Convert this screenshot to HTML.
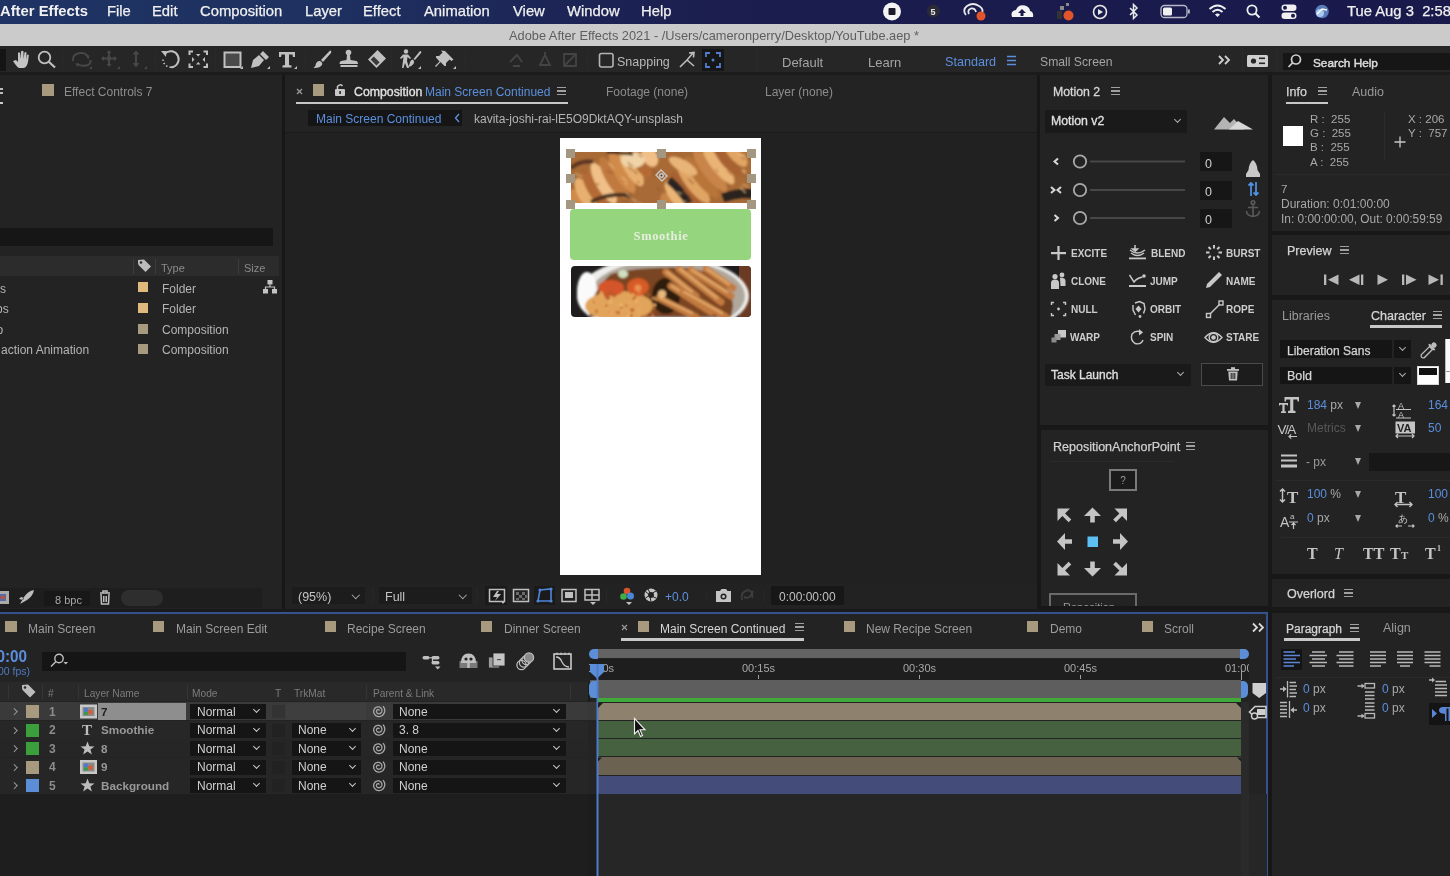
<!DOCTYPE html>
<html><head><meta charset="utf-8">
<style>
*{margin:0;padding:0;box-sizing:border-box}
body{will-change:transform}
html,body{width:1450px;height:876px;overflow:hidden;background:#171717;font-family:"Liberation Sans",sans-serif;font-size:12px;color:#a6a6a6}
.a{position:absolute}
.t{position:absolute;line-height:14px;white-space:nowrap;margin-top:1px}
.p{position:absolute;background:#232323}
.sw{position:absolute;width:10px;height:10px;background:#a89a7e}
.hb{position:absolute;width:9px;height:8px;border-top:1.5px solid #a0a0a0;border-bottom:1.5px solid #a0a0a0}
.hb:after{content:"";position:absolute;left:0;right:0;top:2px;height:1.5px;background:#a0a0a0}
.dd{position:absolute;background:#171717}
.chev{position:absolute;width:6px;height:6px;border-right:1.5px solid #b0b0b0;border-bottom:1.5px solid #b0b0b0;transform:rotate(45deg)}
.blue{color:#5f8fdc}
svg{position:absolute;overflow:visible}
</style></head><body>

<!-- MENU BAR -->
<div class="a" style="left:0;top:0;width:1450px;height:24px;background:linear-gradient(90deg,#1f3464 0%,#1e3161 22%,#1d2b5b 30%,#1c2455 40%,#1b1e4f 50%,#1a1c4d 62%,#191a4b 100%)"></div>
<style>.mn{position:absolute;top:3px;font-size:14.8px;line-height:17px;color:#f0f0f0;white-space:nowrap;-webkit-text-stroke:0.25px #f0f0f0}</style>
<div class="mn" style="left:0;font-weight:bold;-webkit-text-stroke:0">After Effects</div>
<div class="mn" style="left:107px">File</div>
<div class="mn" style="left:152px">Edit</div>
<div class="mn" style="left:200px">Composition</div>
<div class="mn" style="left:305px">Layer</div>
<div class="mn" style="left:363px">Effect</div>
<div class="mn" style="left:424px">Animation</div>
<div class="mn" style="left:513px">View</div>
<div class="mn" style="left:567px">Window</div>
<div class="mn" style="left:641px">Help</div>
<div class="mn" style="left:1347px">Tue Aug 3&nbsp; 2:58</div>
<svg width="1450" height="24" style="left:0;top:0">
 <circle cx="892" cy="11.5" r="9" fill="#f4f4f4"/><rect x="888.5" y="8" width="7" height="7" rx="1" fill="#1a1a2a"/>
 <circle cx="933.5" cy="11" r="6.5" fill="#2a2a36"/><text x="930.5" y="15" font-size="9" font-weight="bold" font-family="Liberation Sans" fill="#e8e8e8">5</text>
 <g fill="none" stroke="#eaeaea" stroke-width="1.8"><path d="M966 15 Q962 10 967 6 Q973 2 979 6 Q984 9 982 13"/><path d="M969 14 Q967 10 971 8.5 Q975 8 976 12"/></g>
 <circle cx="981" cy="16" r="4.5" fill="#e2552a"/>
 <path d="M1012 17 Q1010 11 1016 10 Q1018 4 1025 5.5 Q1030 7 1030 11 Q1034 12 1033 17Z" fill="#f4f4f4"/>
 <path d="M1022 9 L1026 13 L1023.5 13 L1023.5 16 L1020.5 16 L1020.5 13 L1018 13Z" fill="#1a1b4d"/>
 <g fill="#8a8a8a"><rect x="1060" y="6" width="4" height="4"/><rect x="1066" y="3" width="3" height="3"/><rect x="1057" y="11" width="5" height="8" fill="#333"/></g>
 <circle cx="1068.5" cy="15.5" r="5" fill="#e2552a"/>
 <circle cx="1100" cy="12" r="6.5" fill="none" stroke="#eaeaea" stroke-width="1.6"/><path d="M1098 9 L1103 12 L1098 15Z" fill="#eaeaea"/>
 <path d="M1130 8 L1137 15 L1133.5 18.5 L1133.5 4.5 L1137 8 L1130 15" fill="none" stroke="#eaeaea" stroke-width="1.5"/>
 <rect x="1161" y="5.5" width="26" height="12" rx="3.5" fill="none" stroke="#b8b8c8" stroke-width="1.3"/>
 <rect x="1163" y="7.5" width="9" height="8" rx="1.5" fill="#f0f0f0"/><rect x="1188" y="9.5" width="1.8" height="4" fill="#b8b8c8"/>
 <g fill="none" stroke="#f0f0f0" stroke-width="2"><path d="M1209.5 9 Q1217.5 2 1225.5 9"/><path d="M1212.5 12 Q1217.5 7.5 1222.5 12"/></g><path d="M1215 14.5 L1217.5 17 L1220 14.5 Q1217.5 12.5 1215 14.5Z" fill="#f0f0f0"/>
 <circle cx="1252" cy="10" r="4.6" fill="none" stroke="#f0f0f0" stroke-width="1.8"/><path d="M1255.5 13.5 L1259.5 17.5" stroke="#f0f0f0" stroke-width="2"/>
 <rect x="1281.5" y="4.5" width="15" height="6.5" rx="3.2" fill="#f0f0f0"/><circle cx="1285" cy="7.75" r="2" fill="#1a1b4d"/>
 <rect x="1281.5" y="12.5" width="15" height="6.5" rx="3.2" fill="#f0f0f0"/><circle cx="1293" cy="15.75" r="2" fill="#1a1b4d"/>
 <circle cx="1322" cy="11.5" r="6.8" fill="#5a7ab8"/><circle cx="1320" cy="13" r="4" fill="#a8c8f0"/><path d="M1317 14 L1322 9 L1327 10" stroke="#fff" stroke-width="1.3" fill="none"/>
</svg>
<!-- TITLE BAR -->
<div class="a" style="left:0;top:24px;width:1450px;height:22px;background:#cbcbcb"></div>
<div class="t" style="left:509px;top:27px;font-size:12.8px;line-height:15px;color:#5e5e5e">Adobe After Effects 2021 - /Users/cameronperry/Desktop/YouTube.aep *</div>


<!-- TOOLBAR ICONS -->
<div class="a" style="left:0;top:46px;width:1450px;height:26px;background:#262626"></div>
<div class="a" style="left:0;top:72px;width:1450px;height:3px;background:#1b1b1b"></div>
<div class="a" style="left:0;top:49px;width:6px;height:22px;background:#151515"></div>
<svg width="1450" height="876" style="left:0;top:0">
<g fill="#c4c4c4" stroke="none">
 <!-- hand -->
 <path d="M13 61 L16 60 L18 62 L18 53 Q19 51.5 20 53 L20.5 59 L21 51.5 Q22.5 50 23.5 51.5 L23.5 59 L24.5 52.5 Q26 51.5 26.5 53 L26 60 L27 55 Q28.5 54 28.8 55.5 L28 62 Q27 67 24 68 L19 68 Q17 67 15 64 Z"/>
</g>
<g fill="none" stroke="#c0c0c0" stroke-width="1.8">
 <circle cx="44.5" cy="57.5" r="5.8"/>
 <path d="M48.8 61.8 L55 67.5" stroke-width="2.2"/>
</g>
<g fill="none" stroke="#474747" stroke-width="2">
 <path d="M73 61 Q72 54 80 53 Q86 52.5 88 57 M77 64 Q82 67 88 65 Q91 63.5 90.5 60"/>
 <path d="M109 52 L109 65 M102.5 58.5 L115.5 58.5"/>
 <path d="M136 52 L136 66"/>
</g>
<g fill="#474747"><path d="M85 55 L89.5 55.5 L88.5 59.5Z M79 63 L75.5 63.5 L77 67Z M109 50 L106.5 53 L111.5 53Z M109 67 L106.5 64 L111.5 64Z M101 58.5 L104 56 L104 61Z M117 58.5 L114 56 L114 61Z M136 50.5 L132.5 54.5 L139.5 54.5Z M136 67.5 L132.5 63 L139.5 63Z"/><circle cx="109" cy="58.5" r="2.2"/></g>
<g fill="#4a4a4a"><path d="M92 69 L92 66 L89 69Z M120 69 L120 66 L117 69Z M147 69 L147 66 L144 69Z"/></g>
<g fill="none" stroke="#c0c0c0" stroke-width="2">
 <path d="M165 53.5 A8 8 0 1 1 171 67.2"/><path d="M171 67.2 A8 8 0 0 1 163 59.5" stroke-dasharray="1.6 2" stroke-width="1.6"/>
 <path d="M189.5 55 L189.5 51.5 L193 51.5 M203.5 51.5 L207 51.5 L207 55 M207 63.5 L207 67 L203.5 67 M193 67 L189.5 67 L189.5 63.5" />
 <rect x="224.5" y="52.5" width="16" height="14.5" fill="#4a4a4a"/>
</g>
<g fill="#c0c0c0">
 <path d="M161 51 L166.5 51 L166 57 Z"/>
 <path d="M196 54 L200.5 54 L198.2 56.5Z M196 64.5 L200.5 64.5 L198.2 62Z M192 57 L192 62 L194.5 59.5Z M205 57 L205 62 L202.5 59.5Z"/>
 <path d="M243 69 L243 66 L240 69Z M270 69 L270 66 L267 69Z M297 69 L297 66 L294 69Z M421 69 L421 66 L418 69Z M456 69 L456 66 L453 69Z"/>
 <!-- pen -->
 <path d="M251 68 L253 60 L259 55 L264 60 L259 66 Z M260 54 L263 51 L269 57 L266 60 Z"/>
 <!-- T -->
 <path d="M279 52 L295 52 L295 57 L293 57 L292.5 54.5 L289 54.5 L289 65 L291.5 65.5 L291.5 67.5 L282.5 67.5 L282.5 65.5 L285 65 L285 54.5 L281.5 54.5 L281 57 L279 57 Z"/>
 <!-- brush -->
 <path d="M330 50.5 Q332 51 331 53 L323 62 L321 60 Z M320 61 Q323 62.5 322 65 Q319.5 68.5 313.5 68 Q316 66 316 63.5 Q317 60.5 320 61Z"/>
 <!-- stamp -->
 <circle cx="348.5" cy="52.5" r="2.8"/>
 <path d="M347 55 L350 55 L350.5 60 L356.5 61 Q358 61.5 358 64 L339.5 64 Q339.5 61.5 341 61 L346.5 60Z"/>
 <rect x="340.5" y="65" width="17" height="2"/>
 <!-- eraser -->
 <path d="M377.5 50 L386 58.5 L376.5 68 L368 59.5 Z"/>
 <!-- puppet -->
 <circle cx="406" cy="51.5" r="2.2"/>
 <path d="M403 54.5 L408 54.5 L411 58 L410 59 L407.5 57 L407 61 L409 68 L407 68 L405 63 L403.5 68 L402 68 L403.5 57 L401 59 L400 58Z"/>
 <path d="M420 51 Q422 51 421 53 L415 60 L413.5 59Z M412.5 59.5 Q415 61 413.5 64 Q411 67 408 67 Q410 64 410 62 Q411 59.5 412.5 59.5Z"/>
 <!-- pin -->
 <path d="M445 51 L453.5 59.5 L451.5 61 L449.5 59.5 L446 63 L446 66 L444.5 66 L440.5 62 L436 67 L435 66 L439.5 61.5 L436 57.5 L436 56 L439 56 L442.5 52.5 L441 50.5 Z"/>
</g>
<path d="M370.6 59.6 L373.8 56.4 L379.6 62.2 L376.4 65.4Z" fill="#3a3a3a"/>
<g stroke="#2a2a2a" stroke-width="1"><path d="M62.5 50 L62.5 70 M155.5 50 L155.5 70 M215.5 50 L215.5 70 M305.5 50 L305.5 70 M391.5 50 L391.5 70 M465.5 50 L465.5 70 M587.5 50 L587.5 70 M757.5 48 L757.5 72 M1242.5 48 L1242.5 72 M1277.5 48 L1277.5 72"/></g>
<!-- dim icons -->
<g fill="none" stroke="#444" stroke-width="1.8">
 <path d="M510 62 L517 55 L522 62 M513 66 L520 66"/>
 <path d="M540 65 L545 55 L550 65 Z M545 55 L545 52"/>
 <path d="M564 54 L576 54 L576 66 L564 66 Z M564 66 L576 54"/>
</g>
<!-- snapping -->
<rect x="599.5" y="53.5" width="13.5" height="13.5" rx="2" fill="none" stroke="#b4b4b4" stroke-width="1.6"/>
<g fill="none" stroke="#bcbcbc" stroke-width="1.6"><path d="M680 67 L687 60 L694 66 M687 60 L693 53 M689 53 L694 52.5 L693.5 57.5"/></g>
<rect x="702" y="49" width="22" height="22" fill="#161616"/>
<g fill="none" stroke="#4f7ed0" stroke-width="1.8"><path d="M706 57 L706 53 L710 53 M716 53 L720 53 L720 57 M720 63 L720 67 L716 67 M710 67 L706 67 L706 63"/><circle cx="713" cy="60" r="1.5" fill="#4f7ed0" stroke="none"/></g>
<!-- workspace hamburger -->
<g stroke="#5c8fde" stroke-width="1.6"><path d="M1007 56.5 L1016 56.5 M1007 60.5 L1016 60.5 M1007 64.5 L1016 64.5"/></g>
<g fill="none" stroke="#d0d0d0" stroke-width="1.8"><path d="M1219 56 L1223 60 L1219 64 M1225 56 L1229 60 L1225 64"/></g>
<rect x="1247" y="55" width="21" height="12" rx="1.5" fill="#cfcfcf"/>
<g fill="#262626"><circle cx="1253.5" cy="61" r="2.6"/><rect x="1259" y="57.5" width="6" height="1.6"/><rect x="1259" y="62.5" width="6" height="1.6"/></g>
<rect x="1283" y="53" width="167" height="17" fill="#161616"/>
<g fill="none" stroke="#d0d0d0" stroke-width="1.7"><circle cx="1296" cy="59.5" r="4.5"/><path d="M1292.8 62.7 L1288.5 67"/></g>
</svg>
<div class="t" style="left:617px;top:53.5px;font-size:12.5px;line-height:15px;color:#b8b8b8">Snapping</div>
<div class="t" style="left:782px;top:53.5px;font-size:13px;line-height:15px;color:#a4a4a4">Default</div>
<div class="t" style="left:868px;top:53.5px;font-size:13px;line-height:15px;color:#a4a4a4">Learn</div>
<div class="t" style="left:945px;top:53.5px;font-size:12.6px;line-height:15px;color:#5c8fde">Standard</div>
<div class="t" style="left:1040px;top:53.5px;font-size:12.2px;line-height:15px;color:#a4a4a4">Small Screen</div>
<div class="t" style="left:1313px;top:55px;font-size:11.8px;line-height:14px;color:#dcdcdc;-webkit-text-stroke:0.45px #dcdcdc">Search Help</div>


<!-- LEFT PANEL -->
<div class="p" style="left:0;top:75px;width:282px;height:534px"></div>
<div class="a" style="left:0;top:88px;width:3px;height:2px;background:#bbb"></div>
<div class="a" style="left:0;top:92px;width:3px;height:2px;background:#bbb"></div>
<div class="a" style="left:0;top:102px;width:3px;height:2px;background:#ccc"></div>
<div class="sw" style="left:42px;top:84px;width:12px;height:12px"></div>
<div class="t" style="left:64px;top:84px;font-size:12px;color:#8e8e8e">Effect Controls 7</div>
<div class="a" style="left:0;top:228px;width:273px;height:18px;background:#161616"></div>
<div class="a" style="left:0;top:256px;width:279px;height:20px;background:#2c2c2c"></div>
<div class="a" style="left:133px;top:259px;width:1px;height:15px;background:#3c3c3c"></div>
<div class="a" style="left:155px;top:259px;width:1px;height:15px;background:#3c3c3c"></div>
<div class="a" style="left:238px;top:259px;width:1px;height:15px;background:#3c3c3c"></div>
<svg width="20" height="20" style="left:136px;top:258px"><path d="M2 5 L2 2 L8 1.5 L15 8.5 L9.5 14 L2.5 7 Z" fill="#bcbcbc"/><circle cx="5" cy="4.5" r="1.3" fill="#2c2c2c"/></svg>
<div class="t" style="left:161px;top:260px;font-size:11px;color:#8a8a8a">Type</div>
<div class="t" style="left:244px;top:260px;font-size:11px;color:#8a8a8a">Size</div>
<div class="sw" style="left:138px;top:282px;background:#e0b97f"></div>
<div class="sw" style="left:138px;top:303px;background:#e0b97f"></div>
<div class="sw" style="left:138px;top:324px"></div>
<div class="sw" style="left:138px;top:344px"></div>
<div class="t" style="left:162px;top:281px;color:#b4b4b4">Folder</div>
<div class="t" style="left:162px;top:301px;color:#b4b4b4">Folder</div>
<div class="t" style="left:162px;top:322px;color:#b4b4b4">Composition</div>
<div class="t" style="left:162px;top:342px;color:#b4b4b4">Composition</div>
<div class="t" style="left:0px;top:281px;color:#b4b4b4">s</div>
<div class="t" style="left:-4px;top:301px;color:#b4b4b4">os</div>
<div class="t" style="left:-3.5px;top:322px;color:#b4b4b4">o</div>
<div class="t" style="left:1px;top:342px;color:#b4b4b4">action Animation</div>
<svg width="20" height="20" style="left:262px;top:279px"><g fill="#c4c4c4"><rect x="5.5" y="1" width="5" height="4.5"/><rect x="1" y="10" width="5" height="4.5"/><rect x="10" y="10" width="5" height="4.5"/></g><path d="M8 5.5 L8 8 L3.5 8 L3.5 10 M8 8 L12.5 8 L12.5 10" fill="none" stroke="#c4c4c4" stroke-width="1.2"/></svg>
<!-- left bottom bar -->
<div class="a" style="left:0;top:588px;width:262px;height:20px;background:#1e1e1e"></div>
<svg width="20" height="20" style="left:0;top:588px"><rect x="-6" y="3" width="15" height="13" fill="#aaa"/><rect x="-4" y="6" width="10" height="7" fill="#5a6aa0"/><rect x="1" y="8" width="4" height="3" fill="#c0503a"/></svg>
<svg width="20" height="20" style="left:18px;top:588px"><path d="M2 16 L6 9 Q10 3 16 2 Q15 8 9 12 Z M6 10 L3 9 L1 11 L5 12Z" fill="#bdbdbd"/></svg>
<div class="a" style="left:44px;top:591px;width:46px;height:15px;background:#181818"></div>
<div class="t" style="left:55px;top:592px;font-size:11px;color:#a6a6a6">8 bpc</div>
<svg width="20" height="20" style="left:96px;top:588px"><g fill="none" stroke="#bdbdbd" stroke-width="1.5"><path d="M4 5 L14 5 M7 5 L7 3 L11 3 L11 5 M5 6 L5.5 16 L12.5 16 L13 6"/><path d="M7.5 8 L7.5 14 M9 8 L9 14 M10.5 8 L10.5 14" stroke-width="1"/></g></svg>
<div class="a" style="left:121px;top:590px;width:42px;height:16px;border-radius:8px;background:#2e2e2e"></div>

<!-- COMP PANEL -->
<div class="p" style="left:285px;top:75px;width:752px;height:534px"></div>
<svg width="20" height="20" style="left:293px;top:82px"><path d="M4 7 L9 12 M9 7 L4 12" stroke="#9a9a9a" stroke-width="1.3"/></svg>
<div class="sw" style="left:313px;top:84px;width:11px;height:12px"></div>
<svg width="14" height="14" style="left:334px;top:83px"><g fill="#c8c8c8"><rect x="1" y="6" width="10" height="7" rx="1"/></g><path d="M3.5 6 L3.5 3.5 Q6 0.5 8.5 3" fill="none" stroke="#c8c8c8" stroke-width="1.5"/><rect x="5.3" y="8" width="1.6" height="3" fill="#232323"/></svg>
<div class="t" style="left:354px;top:84px;font-size:12.3px;color:#e2e2e2;-webkit-text-stroke:0.35px #e2e2e2">Composition</div>
<div class="t" style="left:425px;top:84px;font-size:12px;color:#5b8fde">Main Screen Continued</div>
<div class="hb" style="left:557px;top:87px"></div>
<div class="a" style="left:296px;top:102px;width:272px;height:2px;background:#c8c8c8"></div>
<div class="t" style="left:606px;top:84px;font-size:12px;color:#8c8c8c">Footage (none)</div>
<div class="t" style="left:765px;top:84px;font-size:12px;color:#8c8c8c">Layer (none)</div>
<div class="a" style="left:308px;top:110px;width:154px;height:16px;background:#151515"></div>
<div class="t" style="left:316px;top:111px;font-size:12px;color:#5b8fde">Main Screen Continued</div>
<svg width="10" height="14" style="left:453px;top:111px"><path d="M6 3 L2.5 7 L6 11" fill="none" stroke="#5b8fde" stroke-width="1.4"/></svg>
<div class="t" style="left:474px;top:111px;font-size:12px;color:#b4b4b4">kavita-joshi-rai-lE5O9DktAQY-unsplash</div>
<div class="a" style="left:285px;top:132px;width:752px;height:1px;background:#1b1b1b"></div>
<div class="a" style="left:285px;top:133px;width:752px;height:451px;background:#212121"></div>
<!-- comp canvas -->
<div class="a" style="left:560px;top:138px;width:201px;height:437px;background:#fff"></div>
<svg width="180" height="51" style="left:571px;top:152px">
<defs><filter id="bl1" x="-10%" y="-10%" width="120%" height="120%"><feGaussianBlur stdDeviation="0.9"/></filter><clipPath id="cp1"><rect width="180" height="51"/></clipPath></defs>
<g clip-path="url(#cp1)"><rect width="180" height="51" fill="#a86a36"/><g filter="url(#bl1)">
<g transform="translate(42 26) rotate(-30)"><ellipse cx="-42.7" cy="0" rx="7.3" ry="11.0" fill="#d08a4a"/><ellipse cx="-32.0" cy="0" rx="7.3" ry="17.9" fill="#e8b070"/><ellipse cx="-21.3" cy="0" rx="7.3" ry="21.5" fill="#b46a34"/><ellipse cx="-10.7" cy="0" rx="7.3" ry="23.4" fill="#f0c088"/><ellipse cx="0.0" cy="0" rx="7.3" ry="24.0" fill="#c07a40"/><ellipse cx="10.7" cy="0" rx="7.3" ry="23.4" fill="#d08a4a"/><ellipse cx="21.3" cy="0" rx="7.3" ry="21.5" fill="#e8b070"/><ellipse cx="32.0" cy="0" rx="7.3" ry="17.9" fill="#b46a34"/><ellipse cx="42.7" cy="0" rx="7.3" ry="11.0" fill="#f0c088"/></g>
<g transform="translate(135 22) rotate(-38)"><ellipse cx="-46.8" cy="0" rx="7.2" ry="11.3" fill="#c8844a"/><ellipse cx="-36.4" cy="0" rx="7.2" ry="18.6" fill="#eab474"/><ellipse cx="-26.0" cy="0" rx="7.2" ry="22.5" fill="#a86230"/><ellipse cx="-15.6" cy="0" rx="7.2" ry="24.8" fill="#e0a464"/><ellipse cx="-5.2" cy="0" rx="7.2" ry="25.9" fill="#b87438"/><ellipse cx="5.2" cy="0" rx="7.2" ry="25.9" fill="#c8844a"/><ellipse cx="15.6" cy="0" rx="7.2" ry="24.8" fill="#eab474"/><ellipse cx="26.0" cy="0" rx="7.2" ry="22.5" fill="#a86230"/><ellipse cx="36.4" cy="0" rx="7.2" ry="18.6" fill="#e0a464"/><ellipse cx="46.8" cy="0" rx="7.2" ry="11.3" fill="#b87438"/></g>
<ellipse cx="62" cy="8" rx="12" ry="8" fill="#f0d4a8"/>
<ellipse cx="112" cy="14" rx="16" ry="6" fill="#e8b478" transform="rotate(30 112 14)"/>
<path d="M98 28 Q110 38 118 51" stroke="#2a2420" stroke-width="8" fill="none"/>
<path d="M152 46 Q168 40 182 42" stroke="#2a221e" stroke-width="9" fill="none"/>
<path d="M0 16 Q10 8 22 10" stroke="#5a3620" stroke-width="4" fill="none"/>
<path d="M20 50 Q40 40 60 44" stroke="#4a3020" stroke-width="4" fill="none"/>
<path d="M36 0 L62 2" stroke="#4a2e1c" stroke-width="3" fill="none"/>
<path d="M112.1 37.8 L116.6 43.1" stroke="#a6622e" stroke-width="1.2" opacity="0.7"/>
<path d="M117.4 27.0 L122.6 32.0" stroke="#8a4c22" stroke-width="1.2" opacity="0.7"/>
<path d="M116.8 45.9 L119.8 47.9" stroke="#8a4c22" stroke-width="1.2" opacity="0.7"/>
<path d="M68.5 5.2 L71.7 8.1" stroke="#f0c890" stroke-width="1.2" opacity="0.7"/>
<path d="M50.3 46.7 L56.6 49.4" stroke="#8a4c22" stroke-width="1.2" opacity="0.7"/>
<path d="M25.0 31.5 L28.4 32.6" stroke="#8a4c22" stroke-width="1.2" opacity="0.7"/>
<path d="M37.7 11.0 L43.1 16.8" stroke="#f0c890" stroke-width="1.2" opacity="0.7"/>
<path d="M56.5 10.1 L62.2 14.8" stroke="#8a4c22" stroke-width="1.2" opacity="0.7"/>
<path d="M169.4 35.2 L174.6 41.0" stroke="#f0c890" stroke-width="1.2" opacity="0.7"/>
<path d="M3.9 21.2 L10.8 24.6" stroke="#f0c890" stroke-width="1.2" opacity="0.7"/>
<path d="M54.2 30.8 L56.5 32.7" stroke="#f0c890" stroke-width="1.2" opacity="0.7"/>
<path d="M11.9 18.1 L15.3 21.1" stroke="#8a4c22" stroke-width="1.2" opacity="0.7"/>
<path d="M86.6 35.9 L88.7 38.5" stroke="#8a4c22" stroke-width="1.2" opacity="0.7"/>
<path d="M170.9 18.2 L174.9 21.2" stroke="#f0c890" stroke-width="1.2" opacity="0.7"/>
<path d="M65.9 29.5 L68.8 30.5" stroke="#8a4c22" stroke-width="1.2" opacity="0.7"/>
<path d="M112.3 48.7 L115.5 50.2" stroke="#f0c890" stroke-width="1.2" opacity="0.7"/>
<path d="M62.0 18.1 L66.0 22.0" stroke="#8a4c22" stroke-width="1.2" opacity="0.7"/>
<path d="M106.2 39.8 L110.5 42.1" stroke="#f0c890" stroke-width="1.2" opacity="0.7"/>
<path d="M170.2 4.7 L173.9 7.6" stroke="#8a4c22" stroke-width="1.2" opacity="0.7"/>
<path d="M61.2 47.1 L66.3 49.8" stroke="#f0c890" stroke-width="1.2" opacity="0.7"/>
<path d="M55.1 40.7 L59.7 44.8" stroke="#f0c890" stroke-width="1.2" opacity="0.7"/>
<path d="M179.4 8.2 L181.4 10.8" stroke="#a6622e" stroke-width="1.2" opacity="0.7"/>
<path d="M166.2 1.6 L172.1 4.9" stroke="#f0c890" stroke-width="1.2" opacity="0.7"/>
<path d="M82.0 21.5 L84.2 24.0" stroke="#8a4c22" stroke-width="1.2" opacity="0.7"/>
<path d="M144.3 17.0 L146.8 20.2" stroke="#a6622e" stroke-width="1.2" opacity="0.7"/>
<path d="M171.0 32.2 L177.4 34.6" stroke="#f0c890" stroke-width="1.2" opacity="0.7"/>
<path d="M67.1 3.0 L71.9 4.9" stroke="#a6622e" stroke-width="1.2" opacity="0.7"/>
<path d="M153.4 49.8 L157.8 52.7" stroke="#a6622e" stroke-width="1.2" opacity="0.7"/>
<path d="M57.2 14.0 L60.8 18.0" stroke="#8a4c22" stroke-width="1.2" opacity="0.7"/>
<path d="M67.9 50.4 L73.9 55.3" stroke="#f0c890" stroke-width="1.2" opacity="0.7"/>
<path d="M156.2 9.2 L160.7 12.3" stroke="#a6622e" stroke-width="1.2" opacity="0.7"/>
<path d="M156.1 18.4 L161.1 23.2" stroke="#a6622e" stroke-width="1.2" opacity="0.7"/>
<path d="M105.7 1.8 L109.4 4.4" stroke="#a6622e" stroke-width="1.2" opacity="0.7"/>
<path d="M50.6 24.8 L55.7 29.3" stroke="#f0c890" stroke-width="1.2" opacity="0.7"/>
<path d="M172.2 17.3 L174.9 20.2" stroke="#f0c890" stroke-width="1.2" opacity="0.7"/>
<path d="M98.5 12.8 L103.8 16.3" stroke="#a6622e" stroke-width="1.2" opacity="0.7"/>
<path d="M116.5 40.7 L120.2 43.7" stroke="#a6622e" stroke-width="1.2" opacity="0.7"/>
<path d="M168.8 20.8 L175.8 23.8" stroke="#a6622e" stroke-width="1.2" opacity="0.7"/>
<path d="M81.0 18.6 L85.3 20.3" stroke="#8a4c22" stroke-width="1.2" opacity="0.7"/>
<path d="M35.8 18.5 L42.2 21.8" stroke="#8a4c22" stroke-width="1.2" opacity="0.7"/>
</g>
<g fill="none" stroke="#c8c8c8" stroke-width="1.4"><path d="M85 23 L90 18 L96 24 L91 29 Z"/><circle cx="90.5" cy="23.5" r="1.8" fill="#444"/></g>
</g></svg>
<g></g>
<div class="a" style="left:570px;top:209px;width:181px;height:51px;background:#95d57d;border-radius:4px"></div>
<div class="t" style="left:561px;top:228px;width:200px;text-align:center;font-family:'Liberation Serif',serif;font-weight:bold;font-size:12.5px;letter-spacing:0.6px;color:#e6eee0">Smoothie</div>
<svg width="180" height="51" style="left:570.5px;top:265.5px">
<defs><filter id="bl2" x="-10%" y="-10%" width="120%" height="120%"><feGaussianBlur stdDeviation="0.8"/></filter><clipPath id="cp2"><rect width="180" height="51" rx="4"/></clipPath></defs>
<g clip-path="url(#cp2)">
<rect width="180" height="51" fill="#1e1c1c"/>
<rect x="168" y="0" width="12" height="51" fill="#6a3a22"/>
<g filter="url(#bl2)">
<ellipse cx="92" cy="30" rx="86" ry="40" fill="#eeeeec"/>
<ellipse cx="96" cy="30" rx="78" ry="36" fill="#b0a89c"/>
<ellipse cx="16" cy="26" rx="10" ry="20" fill="#fafafa"/>
<path d="M18 51 Q20 25 40 8 Q70 0 120 2 Q160 10 162 40 L160 51Z" fill="#7a4420"/>
<ellipse cx="48" cy="40" rx="34" ry="15" fill="#e2a45a"/>
<ellipse cx="40" cy="22" rx="13" ry="8" fill="#d4542a"/><ellipse cx="67" cy="21" rx="11" ry="9" fill="#d85a26"/>
<circle cx="67" cy="22" r="3.5" fill="#e89050"/>
<ellipse cx="52" cy="8" rx="5" ry="4" fill="#cfe0c0"/>
<ellipse cx="95" cy="30" rx="14" ry="18" fill="#2e1a0e"/>
<path d="M95 6 L125 30" stroke="#c27a40" stroke-width="7" stroke-linecap="round"/>
<path d="M96 6 L121 26" stroke="#e6b070" stroke-width="2.4" stroke-linecap="round" opacity="0.85"/>
<path d="M108 3 L150 36" stroke="#c27a40" stroke-width="7" stroke-linecap="round"/>
<path d="M109 3 L146 32" stroke="#e6b070" stroke-width="2.4" stroke-linecap="round" opacity="0.85"/>
<path d="M120 4 L160 30" stroke="#c27a40" stroke-width="7" stroke-linecap="round"/>
<path d="M121 4 L156 26" stroke="#e6b070" stroke-width="2.4" stroke-linecap="round" opacity="0.85"/>
<path d="M100 20 L140 46" stroke="#c27a40" stroke-width="7" stroke-linecap="round"/>
<path d="M101 20 L136 42" stroke="#e6b070" stroke-width="2.4" stroke-linecap="round" opacity="0.85"/>
<path d="M88 32 L125 51" stroke="#c27a40" stroke-width="7" stroke-linecap="round"/>
<path d="M89 32 L121 47" stroke="#e6b070" stroke-width="2.4" stroke-linecap="round" opacity="0.85"/>
<path d="M135 3 L162 22" stroke="#c27a40" stroke-width="7" stroke-linecap="round"/>
<path d="M136 3 L158 18" stroke="#e6b070" stroke-width="2.4" stroke-linecap="round" opacity="0.85"/>
<path d="M112 26 L155 51" stroke="#c27a40" stroke-width="7" stroke-linecap="round"/>
<path d="M113 26 L151 47" stroke="#e6b070" stroke-width="2.4" stroke-linecap="round" opacity="0.85"/>
<circle cx="91" cy="28" r="4" fill="#e8b880"/>
<circle cx="35.5" cy="39.6" r="1.2" fill="#b8582a"/>
<circle cx="60.7" cy="27.6" r="0.8" fill="#b8582a"/>
<circle cx="36.9" cy="31.9" r="2.0" fill="#b8582a"/>
<circle cx="55.2" cy="39.7" r="1.3" fill="#c87838"/>
<circle cx="35.1" cy="29.8" r="1.9" fill="#b8582a"/>
<circle cx="68.2" cy="42.8" r="0.9" fill="#f0b870"/>
<circle cx="39.6" cy="26.8" r="1.8" fill="#b8582a"/>
<circle cx="58.7" cy="49.0" r="1.3" fill="#b8582a"/>
<circle cx="45.7" cy="46.0" r="1.3" fill="#c87838"/>
<circle cx="77.1" cy="28.4" r="1.0" fill="#c87838"/>
<circle cx="36.8" cy="42.8" r="1.7" fill="#e8a860"/>
<circle cx="47.4" cy="46.8" r="1.5" fill="#b8582a"/>
<circle cx="58.0" cy="48.6" r="1.6" fill="#f0b870"/>
<circle cx="75.7" cy="50.8" r="1.6" fill="#c87838"/>
<circle cx="65.4" cy="34.2" r="1.5" fill="#f0b870"/>
<circle cx="66.4" cy="31.3" r="1.8" fill="#e8a860"/>
<circle cx="38.5" cy="27.6" r="1.8" fill="#b8582a"/>
<circle cx="25.8" cy="46.0" r="1.3" fill="#c87838"/>
<circle cx="21.3" cy="36.7" r="1.3" fill="#f0b870"/>
<circle cx="22.9" cy="41.4" r="0.9" fill="#e8a860"/>
<circle cx="55.8" cy="49.0" r="1.1" fill="#c87838"/>
<circle cx="84.9" cy="33.7" r="0.9" fill="#f0b870"/>
<circle cx="81.7" cy="50.3" r="1.1" fill="#e8a860"/>
<circle cx="30.2" cy="27.1" r="1.8" fill="#e8a860"/>
<circle cx="43.4" cy="29.5" r="1.8" fill="#b8582a"/>
<circle cx="49.9" cy="39.0" r="1.6" fill="#f0b870"/>
<circle cx="60.3" cy="49.5" r="1.4" fill="#b8582a"/>
<circle cx="61.2" cy="43.9" r="1.9" fill="#b8582a"/>
<circle cx="83.6" cy="39.0" r="1.5" fill="#f0b870"/>
<circle cx="71.2" cy="50.7" r="1.2" fill="#b8582a"/>
<circle cx="60.0" cy="41.8" r="0.9" fill="#e8a860"/>
<circle cx="50.3" cy="43.0" r="1.2" fill="#e8a860"/>
<circle cx="68.0" cy="26.6" r="0.9" fill="#f0b870"/>
<circle cx="82.6" cy="32.3" r="1.3" fill="#e8a860"/>
<circle cx="31.5" cy="30.6" r="1.7" fill="#e8a860"/>
<circle cx="39.5" cy="35.4" r="1.7" fill="#f0b870"/>
<circle cx="83.1" cy="43.1" r="1.0" fill="#c87838"/>
<circle cx="62.5" cy="32.7" r="1.2" fill="#b8582a"/>
<circle cx="62.2" cy="28.4" r="1.5" fill="#e8a860"/>
<circle cx="63.9" cy="31.6" r="1.8" fill="#c87838"/>
<circle cx="25.2" cy="44.6" r="1.1" fill="#b8582a"/>
<circle cx="37.6" cy="45.7" r="0.8" fill="#c87838"/>
<circle cx="40.5" cy="46.9" r="1.5" fill="#e8a860"/>
<circle cx="42.1" cy="46.7" r="0.9" fill="#e8a860"/>
<circle cx="58.3" cy="36.5" r="1.4" fill="#e8a860"/>
<circle cx="50.2" cy="41.9" r="1.1" fill="#b8582a"/>
<circle cx="22.3" cy="36.3" r="1.0" fill="#b8582a"/>
<circle cx="81.3" cy="48.0" r="2.0" fill="#b8582a"/>
<circle cx="56.3" cy="50.6" r="1.7" fill="#f0b870"/>
<circle cx="68.5" cy="46.9" r="1.6" fill="#e8a860"/>
</g></g></svg>
<!-- handles -->
<div class="a" style="left:566px;top:149px;width:9px;height:9px;background:#a39781"></div>
<div class="a" style="left:657px;top:149px;width:9px;height:9px;background:#a39781"></div>
<div class="a" style="left:747px;top:149px;width:9px;height:9px;background:#a39781"></div>
<div class="a" style="left:566px;top:174px;width:9px;height:9px;background:#a39781"></div>
<div class="a" style="left:747px;top:174px;width:9px;height:9px;background:#a39781"></div>
<div class="a" style="left:566px;top:200px;width:9px;height:9px;background:#a39781"></div>
<div class="a" style="left:657px;top:200px;width:9px;height:9px;background:#a39781"></div>
<div class="a" style="left:747px;top:200px;width:9px;height:9px;background:#a39781"></div>
<!-- comp bottom bar -->
<div class="a" style="left:285px;top:584px;width:752px;height:25px;background:#222"></div>
<div class="dd" style="left:292px;top:587px;width:73px;height:17px;background:#1c1c1c"></div>
<div class="t" style="left:298px;top:589px;font-size:12.5px;color:#c4c4c4">(95%)</div>
<div class="chev" style="left:353px;top:591.5px;width:5.5px;height:5.5px"></div>
<div class="dd" style="left:379px;top:587px;width:93px;height:17px;background:#1c1c1c"></div>
<div class="t" style="left:385px;top:589px;font-size:12.5px;color:#c4c4c4">Full</div>
<div class="chev" style="left:460px;top:591.5px;width:5.5px;height:5.5px"></div>
<div class="a" style="left:485px;top:586px;width:22px;height:19px;background:#1a1a1a"></div>
<div class="a" style="left:534px;top:586px;width:21px;height:19px;background:#1a1a1a"></div>
<svg width="1450" height="876" style="left:0;top:0">
 <g fill="none" stroke="#c0c0c0" stroke-width="1.5">
  <rect x="489.5" y="589.5" width="15" height="12"/>
  <rect x="513.5" y="589.5" width="15" height="12"/>
  <rect x="562" y="589.5" width="14" height="12"/>
  <path d="M585 592 L585 589.5 L599 589.5 L599 600 L585 600 Z M592 589.5 L592 600 M585 595 L599 595"/>
 </g>
 <path d="M497 591 L493 597 L497 597 L495 601 L501 594 L497 594 L499 591Z" fill="#c0c0c0"/>
 <path d="M501 601 L505 601 L503 604Z M590 602 L596 602 L593 605Z M626 602 L632 602 L629 605Z" fill="#c0c0c0"/>
 <g fill="#6a6a6a"><rect x="516" y="592" width="3" height="3"/><rect x="522" y="592" width="3" height="3"/><rect x="519" y="595" width="3" height="3"/><rect x="525" y="595" width="2" height="3"/><rect x="516" y="598" width="3" height="2"/><rect x="522" y="598" width="3" height="2"/></g>
 <rect x="565" y="592" width="8" height="6" fill="#c0c0c0"/>
 <path d="M538 601 L540 590 L551 589 L551 601 Z" fill="none" stroke="#4f84d8" stroke-width="1.6"/>
 <g fill="#4f84d8"><circle cx="538" cy="601" r="1.6"/><circle cx="540" cy="590" r="1.6"/><circle cx="551" cy="589" r="1.6"/><circle cx="551" cy="601" r="1.6"/></g>
 <circle cx="627" cy="591" r="3.3" fill="#d9532e"/><circle cx="623.5" cy="596.5" r="3.3" fill="#3fae4a"/><circle cx="630.5" cy="596" r="3.5" fill="#4a86d8"/>
 <circle cx="651" cy="595" r="6.5" fill="#c4c4c4"/><circle cx="651" cy="595" r="3" fill="#222"/>
 <path d="M648 589 L650 593 M656 591 L652.5 593 M656 598 L652.5 596.5 M651 601.5 L650 597 M645.5 598 L648.5 596 M645.5 591.5 L648.5 594" stroke="#222" stroke-width="1"/>
 <path d="M716 591 L720 591 L721.5 589 L726 589 L727.5 591 L731 591 L731 602 L716 602Z" fill="#c4c4c4"/><circle cx="723.5" cy="596.5" r="3" fill="#222"/><circle cx="723.5" cy="596.5" r="1.5" fill="#c4c4c4"/>
 <path d="M742 600 Q740 592 748 590 Q754 592 752 598 M744 597 Q750 600 753 591" stroke="#3c3c3c" stroke-width="2" fill="none"/>
 <path d="M606.5 590 L606.5 602 M707 590 L707 602 M764 590 L764 602 M477 588 L477 603 M373 588 L373 603" stroke="#292929" stroke-width="1"/>
</svg>
<div class="t" style="left:665px;top:589px;font-size:12px;color:#5b8fde">+0.0</div>
<div class="a" style="left:771px;top:586px;width:73px;height:19px;background:#171717"></div>
<div class="t" style="left:779px;top:589px;font-size:12px;color:#c0c0c0">0:00:00:00</div>

<!-- MOTION PANEL -->
<div class="p" style="left:1040px;top:75px;width:228px;height:350px"></div>

<div class="t" style="left:1053px;top:84px;font-size:12.3px;color:#d6d6d6;-webkit-text-stroke:0.3px #d6d6d6">Motion 2</div>
<div class="hb" style="left:1111px;top:87px"></div>
<div class="a" style="left:1045px;top:110px;width:142px;height:23px;background:#1a1a1a"></div>
<div class="t" style="left:1051px;top:113px;font-size:12.3px;color:#e0e0e0;-webkit-text-stroke:0.3px #e0e0e0">Motion v2</div>
<div class="chev" style="left:1175px;top:117px;width:5px;height:5px"></div>
<svg width="1450" height="876" style="left:0;top:0">
 <path d="M1214 129.5 L1224 117 L1230 123 L1234 119 L1244 129.5 Z" fill="#b4b4b4"/>
 <path d="M1229 129.5 L1238 121 L1253 129.5 Z" fill="#d8d8d8"/>
 <g fill="none" stroke="#a8a8a8" stroke-width="1.8">
  <circle cx="1080" cy="161.5" r="6.2"/><circle cx="1080" cy="190" r="6.2"/><circle cx="1080" cy="218" r="6.2"/>
 </g>
 <g stroke="#474747" stroke-width="2"><path d="M1090 161.5 L1185 161.5 M1090 190 L1185 190 M1090 218 L1185 218"/></g>
 <g fill="none" stroke="#d8d8d8" stroke-width="2">
  <path d="M1058 158.5 L1054.5 161.5 L1058 164.5"/>
  <path d="M1051 187 L1054.5 190 L1051 193 M1061 187 L1057.5 190 L1061 193"/>
  <path d="M1054.5 215 L1058 218 L1054.5 221"/>
 </g>
 <path d="M1253 160 Q1257 163 1257.5 170 L1260 174 L1260 177 L1246 177 L1246 174 L1248.5 170 Q1249 163 1253 160Z" fill="#c8c8c8"/>
 <g stroke="#4f8fe0" stroke-width="1.8" fill="none"><path d="M1251 196 L1251 183 M1248.5 185.5 L1251 183 L1253.5 185.5 M1256 182 L1256 195 M1253.5 192.5 L1256 195 L1258.5 192.5"/></g>
 <g stroke="#5a5a5a" stroke-width="1.6" fill="none"><circle cx="1253" cy="202.5" r="1.8"/><path d="M1253 204.5 L1253 216 M1248 207.5 L1258 207.5 M1246.5 211 Q1247 216 1253 216.5 Q1259 216 1259.5 211"/></g>
</svg>
<div class="a" style="left:1200px;top:152px;width:32px;height:19px;background:#161616"></div>
<div class="a" style="left:1200px;top:181px;width:32px;height:19px;background:#161616"></div>
<div class="a" style="left:1200px;top:209px;width:32px;height:19px;background:#161616"></div>
<div class="t" style="left:1205px;top:155.5px;font-size:12.5px;color:#cfcfcf">0</div>
<div class="t" style="left:1205px;top:183.5px;font-size:12.5px;color:#cfcfcf">0</div>
<div class="t" style="left:1205px;top:211.5px;font-size:12.5px;color:#cfcfcf">0</div>
<style>.mb{position:absolute;margin-top:1px;line-height:12px;font-size:10px;font-weight:bold;letter-spacing:0px;color:#cdcdcd;white-space:nowrap}</style>
<div class="mb" style="left:1071px;top:247px">EXCITE</div>
<div class="mb" style="left:1151px;top:247px">BLEND</div>
<div class="mb" style="left:1226px;top:247px">BURST</div>
<div class="mb" style="left:1071px;top:275px">CLONE</div>
<div class="mb" style="left:1150px;top:275px">JUMP</div>
<div class="mb" style="left:1226px;top:275px">NAME</div>
<div class="mb" style="left:1071px;top:303px">NULL</div>
<div class="mb" style="left:1150px;top:303px">ORBIT</div>
<div class="mb" style="left:1226px;top:303px">ROPE</div>
<div class="mb" style="left:1070px;top:331px">WARP</div>
<div class="mb" style="left:1150px;top:331px">SPIN</div>
<div class="mb" style="left:1226px;top:331px">STARE</div>
<svg width="1450" height="876" style="left:0;top:0">
 <g fill="#c8c8c8" stroke="none">
  <!-- excite plus -->
  <rect x="1051" y="252" width="15" height="2.2"/><rect x="1057.4" y="246" width="2.2" height="14"/>
  <!-- clone people -->
  <circle cx="1055" cy="276.5" r="2.6"/><path d="M1051 289 L1051 283 Q1051 279.5 1055 279.5 Q1059 279.5 1059 283 L1059 289Z"/>
  <circle cx="1062" cy="275" r="2.4"/><path d="M1060 277.8 Q1065.5 277.5 1065.5 281 L1065.5 286 L1060.5 286Z"/>
  <!-- warp squares -->
  <rect x="1058" y="330" width="8" height="7.5"/><rect x="1054.5" y="334" width="6" height="6" fill="#9a9a9a"/><rect x="1051.5" y="337.5" width="5" height="5" fill="#8a8a8a"/>
  <!-- blend -->
  <path d="M1135 245 L1135 251 L1132.5 249 L1137.5 249 L1135 251.5" stroke="#c8c8c8" stroke-width="1.5" fill="none"/>
  <rect x="1129" y="257.5" width="17" height="1.8"/>
  <!-- jump -->
  <rect x="1129" y="285" width="17" height="2"/>
  <circle cx="1144" cy="276" r="1.8"/>
  <!-- null -->
  <circle cx="1058.5" cy="309" r="1.4"/>
  <!-- orbit center diamond -->
  <path d="M1138.5 305.5 L1141.5 309 L1138.5 312.5 L1135.5 309Z"/>
  <circle cx="1140" cy="316.5" r="1.4"/>
  <!-- spin arrow head -->
  <path d="M1139 329 L1143 332.5 L1139 335.5Z"/>
  <!-- name pencil -->
  <path d="M1219 272 L1222 275 L1210 287 L1206 288 L1207 284Z"/>
  <!-- burst center hollow -->
  <!-- stare eye pupil -->
  <circle cx="1213.5" cy="337.5" r="2.3"/>
 </g>
 <g fill="none" stroke="#c8c8c8" stroke-width="1.4">
  <path d="M1130 250 Q1137.5 256 1145 250 M1131 253 Q1137.5 258 1144 253"/>
  <path d="M1129.5 275 L1134 282 Q1137 278 1142.5 277"/>
  <path d="M1051.5 305 L1051.5 302.5 L1054 302.5 M1063 302.5 L1065.5 302.5 L1065.5 305 M1065.5 313 L1065.5 315.5 L1063 315.5 M1054 315.5 L1051.5 315.5 L1051.5 313"/>
  <path d="M1135 303 L1139.5 301.5 L1144 303.5 L1145 309 L1143.5 313.5 M1135.5 315 L1133 310 L1133 305"/>
  <path d="M1142 332.5 Q1136 329.5 1132 334 Q1130 340 1135 343.5 Q1141 345 1143 340"/>
  <rect x="1206.5" y="313.5" width="4" height="4"/><rect x="1219" y="301" width="4" height="4"/><path d="M1210 314 L1219.5 304.5"/>
  <path d="M1205 337.5 Q1213.5 328 1222 337.5 Q1213.5 347 1205 337.5Z"/>
  <circle cx="1213.5" cy="337.5" r="4.3"/>
 </g>
 <g stroke="#c8c8c8" stroke-width="2">
  <path d="M1214 245 L1214 248.5 M1214 256.5 L1214 260 M1206 252.5 L1209.5 252.5 M1218.5 252.5 L1222 252.5 M1208.5 247 L1210.8 249.3 M1217.2 255.7 L1219.5 258 M1219.5 247 L1217.2 249.3 M1210.8 255.7 L1208.5 258"/>
 </g>
</svg>
<div class="a" style="left:1045px;top:364px;width:146px;height:22px;background:#1a1a1a"></div>
<div class="t" style="left:1051px;top:367px;font-size:12px;color:#e0e0e0;-webkit-text-stroke:0.3px #e0e0e0">Task Launch</div>
<div class="chev" style="left:1178px;top:370px;width:5px;height:5px"></div>
<div class="a" style="left:1201px;top:363px;width:62px;height:23px;border:1px solid #4a4a4a;background:#1c1c1c"></div>
<svg width="16" height="16" style="left:1225px;top:366px"><g fill="#c0c0c0"><rect x="2" y="3" width="12" height="1.8"/><rect x="6" y="1.2" width="4" height="2"/><path d="M3.3 5.5 L12.7 5.5 L12 14.5 L4 14.5Z"/></g><g stroke="#1c1c1c" stroke-width="1"><path d="M6.2 7 L6.2 13 M8 7 L8 13 M9.8 7 L9.8 13"/></g></svg>
<!-- Reposition panel -->
<div class="a" style="left:1040px;top:425px;width:228px;height:5px;background:#181818"></div>
<div class="p" style="left:1041px;top:430px;width:227px;height:176px"></div>
<div class="t" style="left:1053px;top:439px;font-size:12.5px;color:#cfcfcf;-webkit-text-stroke:0.25px #cfcfcf">RepositionAnchorPoint</div>
<div class="hb" style="left:1186px;top:442px"></div>
<div class="a" style="left:1050px;top:461px;width:124px;height:1px;background:#2b2b2b"></div>
<div class="a" style="left:1109px;top:469px;width:28px;height:22px;border:2px solid #7a7a7a;background:#1b1b1b"></div>
<div class="t" style="left:1109px;top:473px;width:28px;text-align:center;font-size:10px;color:#999">?</div>
<svg width="1450" height="876" style="left:0;top:0">
 <g fill="#c4c4c4">
  <path d="M1057.5 508.5 L1070.0 508.5 L1065.1 513.4 L1071.3 519.6 L1068.6 522.3 L1062.4 516.1 L1057.5 521.0Z"/>
  <path d="M1127.0 508.5 L1114.5 508.5 L1119.4 513.4 L1113.2 519.6 L1115.9 522.3 L1122.1 516.1 L1127.0 521.0Z"/>
  <path d="M1057.5 575.5 L1070.0 575.5 L1065.1 570.6 L1071.3 564.4 L1068.6 561.7 L1062.4 567.9 L1057.5 563.0Z"/>
  <path d="M1127.0 575.5 L1114.5 575.5 L1119.4 570.6 L1113.2 564.4 L1115.9 561.7 L1122.1 567.9 L1127.0 563.0Z"/>
  <path d="M1092.5 507.5 L1101 516 L1094.8 516 L1094.8 522.5 L1090.2 522.5 L1090.2 516 L1084 516Z"/>
  <path d="M1092.5 576.5 L1101 568 L1094.8 568 L1094.8 561.5 L1090.2 561.5 L1090.2 568 L1084 568Z"/>
  <path d="M1057 541.5 L1065 533 L1065 539.2 L1072 539.2 L1072 543.8 L1065 543.8 L1065 550Z"/>
  <path d="M1128 541.5 L1120 533 L1120 539.2 L1113 539.2 L1113 543.8 L1120 543.8 L1120 550Z"/>
 </g>
 <rect x="1087.5" y="536.5" width="10.5" height="10.5" fill="#5cc0f2"/>
</svg>
<div class="a" style="left:1049px;top:593px;width:88px;height:13px;border:2px solid #6a6a6a;border-bottom:none;overflow:hidden"><div class="t" style="left:12px;top:4px;font-size:11px;color:#9a9a9a">Reposition</div></div>

<!-- INFO PANELS -->
<div class="a" style="left:1268px;top:75px;width:4px;height:538px;background:#181818"></div>
<div class="p" style="left:1272px;top:75px;width:178px;height:156px"></div>
<div class="t" style="left:1286px;top:84px;font-size:12.5px;color:#d4d4d4;-webkit-text-stroke:0.25px #d4d4d4">Info</div>
<div class="hb" style="left:1318px;top:87px"></div>
<div class="a" style="left:1286px;top:102px;width:42px;height:2px;background:#c8c8c8"></div>
<div class="t" style="left:1352px;top:84px;font-size:12.5px;color:#9a9a9a">Audio</div>
<div class="a" style="left:1283px;top:126px;width:20px;height:20px;background:#fff"></div>
<style>.inf{position:absolute;margin-top:1px;line-height:14px;font-size:11.5px;color:#a8a8a8;white-space:nowrap}</style>
<div class="inf" style="left:1310px;top:111px">R :&nbsp; 255</div>
<div class="inf" style="left:1310px;top:125px">G :&nbsp; 255</div>
<div class="inf" style="left:1310px;top:139px">B :&nbsp; 255</div>
<div class="inf" style="left:1310px;top:154px">A :&nbsp; 255</div>
<div class="inf" style="left:1408px;top:111px">X : 206</div>
<div class="inf" style="left:1408px;top:125px">Y :&nbsp; 757</div>
<div class="a" style="left:1384px;top:112px;width:1px;height:48px;background:#2c2c2c"></div>
<div class="a" style="left:1274px;top:174px;width:176px;height:1px;background:#2a2a2a"></div>
<svg width="14" height="14" style="left:1393px;top:135px"><path d="M7 1.5 L7 12.5 M1.5 7 L12.5 7" stroke="#c8c8c8" stroke-width="1.3"/></svg>
<div class="inf" style="left:1281px;top:181px">7</div>
<div class="inf" style="left:1281px;top:196px;font-size:12px">Duration: 0:01:00:00</div>
<div class="inf" style="left:1281px;top:211px;font-size:11.9px">In: 0:00:00:00, Out: 0:00:59:59</div>
<div class="a" style="left:1272px;top:231px;width:178px;height:4px;background:#181818"></div>
<div class="p" style="left:1272px;top:235px;width:178px;height:60px"></div>
<div class="t" style="left:1287px;top:243px;font-size:12.5px;color:#d4d4d4;-webkit-text-stroke:0.25px #d4d4d4">Preview</div>
<div class="hb" style="left:1340px;top:246px"></div>
<svg width="1450" height="876" style="left:0;top:0"><g fill="#b8b8b8">
 <rect x="1324" y="274.5" width="2.3" height="10.5"/><path d="M1338.5 274.5 L1338.5 285 L1328 279.7Z"/>
 <path d="M1359.5 274.5 L1359.5 285 L1349 279.7Z"/><rect x="1361" y="274.5" width="2.3" height="10.5"/>
 <path d="M1377.5 274.5 L1377.5 285 L1388 279.7Z"/>
 <rect x="1402" y="274.5" width="2.3" height="10.5"/><path d="M1406 274.5 L1406 285 L1416.5 279.7Z"/>
 <path d="M1428.5 274.5 L1428.5 285 L1439 279.7Z"/><rect x="1440.5" y="274.5" width="2.3" height="10.5"/>
</g></svg>
<div class="a" style="left:1272px;top:295px;width:178px;height:5px;background:#181818"></div>
<div class="p" style="left:1272px;top:300px;width:178px;height:274px"></div>
<div class="t" style="left:1282px;top:308px;font-size:12.5px;color:#9a9a9a">Libraries</div>
<div class="t" style="left:1371px;top:308px;font-size:12.5px;color:#d4d4d4;-webkit-text-stroke:0.25px #d4d4d4">Character</div>
<div class="hb" style="left:1433px;top:311px"></div>
<div class="a" style="left:1370px;top:325px;width:72px;height:2.5px;background:#c8c8c8"></div>
<div class="a" style="left:1280px;top:340px;width:112px;height:18px;background:#151515"></div>
<div class="a" style="left:1394px;top:340px;width:17px;height:18px;background:#151515"></div>
<div class="t" style="left:1287px;top:343px;font-size:12px;color:#d4d4d4;-webkit-text-stroke:0.25px #d4d4d4">Liberation Sans</div>
<div class="chev" style="left:1399.5px;top:345px;width:5px;height:5px"></div>
<div class="a" style="left:1280px;top:367px;width:112px;height:17px;background:#151515"></div>
<div class="a" style="left:1394px;top:367px;width:17px;height:17px;background:#151515"></div>
<div class="t" style="left:1287px;top:368px;font-size:12.5px;color:#d4d4d4;-webkit-text-stroke:0.25px #d4d4d4">Bold</div>
<div class="chev" style="left:1399.5px;top:371px;width:5px;height:5px"></div>
<svg width="20" height="20" style="left:1418px;top:341px"><g transform="rotate(45 10 10)"><rect x="7.3" y="-1" width="5.4" height="5" rx="2.4" fill="#bdbdbd"/><rect x="5.8" y="3.6" width="8.4" height="2" rx="0.8" fill="#bdbdbd"/><path d="M7.9 5.8 L12.1 5.8 L12.1 17.5 Q10 20.5 7.9 17.5Z" fill="none" stroke="#bdbdbd" stroke-width="1.3"/></g></svg>
<div class="a" style="left:1417px;top:365.5px;width:22px;height:19px;border:1.5px solid #d8d8d8;background:#fff"></div>
<div class="a" style="left:1419px;top:367.5px;width:18px;height:7px;background:#111"></div>
<div class="a" style="left:1445px;top:339px;width:5px;height:44px;background:#fafafa"></div>
<div class="a" style="left:1445px;top:370.5px;width:5px;height:1.5px;background:#9a9a9a"></div><div class="a" style="left:1445px;top:339px;width:1px;height:44px;background:#bdbdbd"></div>
<style>.bl{color:#5b8fde}.cv{position:absolute;line-height:14px;font-size:12px;color:#a8a8a8;white-space:nowrap}
.tri{position:absolute;width:0;height:0;border-left:3.7px solid transparent;border-right:3.7px solid transparent;border-top:7px solid #a8a8a8}</style>
<div class="cv" style="left:1307px;top:398px"><span class="bl">184</span> px</div>
<div class="tri" style="left:1354.5px;top:402px"></div>
<div class="cv" style="left:1428px;top:398px"><span class="bl">164</span></div>
<div class="cv" style="left:1307px;top:421px;color:#585858">Metrics</div>
<div class="tri" style="left:1354.5px;top:425px"></div>
<div class="cv" style="left:1428px;top:421px"><span class="bl">50</span></div>
<div class="cv" style="left:1306px;top:455px;color:#9a9a9a">- px</div>
<div class="tri" style="left:1354.5px;top:458px"></div>
<div class="a" style="left:1369px;top:453px;width:81px;height:18px;background:#171717"></div>
<div class="a" style="left:1276px;top:480px;width:174px;height:1px;background:#2b2b2b"></div>
<div class="cv" style="left:1307px;top:487px"><span class="bl">100</span> %</div>
<div class="tri" style="left:1354.5px;top:491px"></div>
<div class="cv" style="left:1428px;top:487px"><span class="bl">100</span></div>
<div class="cv" style="left:1307px;top:511px"><span class="bl">0</span> px</div>
<div class="tri" style="left:1354.5px;top:515px"></div>
<div class="cv" style="left:1428px;top:511px"><span class="bl">0</span> %</div>
<div class="a" style="left:1281px;top:537px;width:169px;height:1px;background:#2b2b2b"></div>
<svg width="1450" height="876" style="left:0;top:0">
 <g fill="#c4c4c4" font-family="Liberation Serif" font-weight="bold">
  <path d="M1279 403 L1288 403 L1288 405.5 L1287 405.5 L1286.8 404.8 L1284.6 404.8 L1284.6 411.2 L1286 411.5 L1286 413 L1281 413 L1281 411.5 L1282.4 411.2 L1282.4 404.8 L1280.2 404.8 L1280 405.5 L1279 405.5Z"/><path d="M1284.5 397 L1299 397 L1299 401.5 L1297.6 401.5 L1297.2 399.4 L1293.3 399.4 L1293.3 410.6 L1295.5 411 L1295.5 413 L1288 413 L1288 411 L1290.2 410.6 L1290.2 399.4 L1286.3 399.4 L1285.9 401.5 L1284.5 401.5Z"/>
  <text x="1307" y="559" font-size="16">T</text>
  <text x="1334" y="559" font-size="16" font-style="italic" font-weight="normal">T</text>
  <text x="1363" y="559" font-size="16">TT</text>
  <text x="1390" y="559" font-size="16">T</text><text x="1401" y="559" font-size="11">T</text>
  <text x="1425" y="559" font-size="16">T</text><text x="1437" y="551" font-size="8">1</text>
  <text x="1287" y="503" font-size="17">T</text>
  <text x="1395" y="503" font-size="17">T</text>
 </g>
 <g fill="none" stroke="#c4c4c4" stroke-width="1.4">
  <path d="M1282.5 489 L1282.5 502 M1280 491.5 L1282.5 489 L1285 491.5 M1280 499.5 L1282.5 502 L1285 499.5"/>
  <path d="M1395 504.5 L1412 504.5 M1397.5 502 L1395 504.5 L1397.5 507 M1409.5 502 L1412 504.5 L1409.5 507"/>
  <path d="M1281 455.5 L1297 455.5 M1281 460.5 L1297 460.5" stroke-width="2.2"/><path d="M1281 466 L1297 466" stroke-width="3"/>
 </g>
 <g fill="#c4c4c4" font-family="Liberation Sans">
  <text x="1277.5" y="433.5" font-size="13.5" letter-spacing="-1.5">V/A</text>
  <text x="1398" y="409" font-size="9">A</text><text x="1398" y="418" font-size="9">A</text>
  <text x="1280" y="527" font-size="14">A</text><text x="1290" y="519" font-size="8">a</text>
 </g>
 <g fill="none" stroke="#c4c4c4" stroke-width="1.2">
  <path d="M1396 409.5 L1411 409.5 M1396 418 L1411 418 M1394 405 L1394 416 M1392.5 406.5 L1394 405 L1395.5 406.5 M1392.5 414.5 L1394 416 L1395.5 414.5"/>
  <path d="M1289 436.5 L1297 436.5 M1291.2 434.3 L1289 436.5 L1291.2 438.7"/>
  <path d="M1289 522 L1298 522 M1293.5 523 L1293.5 529 M1291.5 525 L1293.5 523 L1295.5 525"/>
  <path d="M1396 436 L1414 436 M1398 434 L1396 436 L1398 438 M1412 434 L1414 436 L1412 438"/>
  <path d="M1396 526 L1402 526 M1414 526 L1408 526 M1397.5 524.5 L1396 526 L1397.5 527.5 M1412.5 524.5 L1414 526 L1412.5 527.5"/>
 </g>
 <rect x="1395.5" y="421.5" width="19.5" height="12" fill="#c4c4c4"/>
 <text x="1397" y="432" font-size="11" font-family="Liberation Sans" font-weight="bold" fill="#232323">VA</text>
 <text x="1398" y="522" font-size="10" font-family="Liberation Sans" fill="#c4c4c4">あ</text>
</svg>
<div class="a" style="left:1272px;top:574px;width:178px;height:5px;background:#181818"></div>
<div class="p" style="left:1272px;top:579px;width:178px;height:28px"></div>
<div class="t" style="left:1287px;top:586px;font-size:12.5px;color:#d4d4d4;-webkit-text-stroke:0.25px #d4d4d4">Overlord</div>
<div class="hb" style="left:1344px;top:589px"></div>

<!-- TIMELINE -->
<div class="a" style="left:0;top:609px;width:1272px;height:4px;background:#1a1a1a"></div>
<div class="p" style="left:0;top:613px;width:1268px;height:263px"></div>
<div class="a" style="left:0;top:612px;width:1268px;height:2px;background:#34528e"></div>
<div class="a" style="left:1266px;top:612px;width:2px;height:264px;background:#34528e"></div>
<style>.tb{position:absolute;line-height:14px;font-size:12px;color:#9c9c9c;white-space:nowrap;margin-top:1.5px}</style>
<div class="sw" style="left:5px;top:621px;width:12px;height:11px"></div>
<div class="tb" style="left:28px;top:620px">Main Screen</div>
<div class="sw" style="left:153px;top:621px;width:11px;height:11px"></div>
<div class="tb" style="left:176px;top:620px">Main Screen Edit</div>
<div class="sw" style="left:325px;top:621px;width:11px;height:11px"></div>
<div class="tb" style="left:347px;top:620px">Recipe Screen</div>
<div class="sw" style="left:481px;top:621px;width:11px;height:11px"></div>
<div class="tb" style="left:504px;top:620px">Dinner Screen</div>
<svg width="12" height="12" style="left:620px;top:622px"><path d="M2 3 L7 8 M7 3 L2 8" stroke="#9a9a9a" stroke-width="1.2"/></svg>
<div class="sw" style="left:638px;top:621px;width:11px;height:11px"></div>
<div class="tb" style="left:660px;top:620px;color:#d6d6d6">Main Screen Continued</div>
<div class="hb" style="left:795px;top:623px"></div>
<div class="a" style="left:621px;top:638px;width:183px;height:2.5px;background:#c8c8c8"></div>
<div class="sw" style="left:844px;top:621px;width:11px;height:11px"></div>
<div class="tb" style="left:866px;top:620px">New Recipe Screen</div>
<div class="sw" style="left:1027px;top:621px;width:11px;height:11px"></div>
<div class="tb" style="left:1050px;top:620px">Demo</div>
<div class="sw" style="left:1142px;top:621px;width:11px;height:11px"></div>
<div class="tb" style="left:1164px;top:620px">Scroll</div>
<svg width="16" height="14" style="left:1251px;top:621px"><path d="M2 2.5 L6 6.5 L2 10.5 M8 2.5 L12 6.5 L8 10.5" fill="none" stroke="#d8d8d8" stroke-width="1.8"/></svg>
<div class="t" style="left:-7px;top:646px;font-size:17px;line-height:19px;font-weight:bold;color:#5b8fde;transform:scaleX(0.9);transform-origin:right center">0:00</div>
<div class="t" style="left:-2px;top:664px;font-size:10.5px;line-height:12px;color:#4f7ac0">00 fps)</div>
<div class="a" style="left:42px;top:652px;width:364px;height:19px;background:#151515"></div>
<svg width="1450" height="876" style="left:0;top:0">
 <g fill="none" stroke="#c0c0c0" stroke-width="1.4"><circle cx="59" cy="658.5" r="4.2"/><path d="M56 661.5 L51 666.5"/></g>
 <path d="M63.5 662 L68 662 L65.75 664.5Z" fill="#c0c0c0"/>
 <!-- timeline icons -->
 <g fill="#c0c0c0">
  <rect x="422.5" y="656" width="7" height="3.5" rx="1.7"/><rect x="431.5" y="656" width="8" height="3.5" rx="1.7"/><rect x="431.5" y="661" width="8" height="3.5" rx="1.7"/>
  <path d="M435 666.5 L440.5 666.5 L437.75 669.5Z"/>
 </g>
 <g fill="none" stroke="#c0c0c0" stroke-width="1.2"><path d="M429 657.75 L432 657.75 M432.5 658 L432.5 662.5"/></g>
 <rect x="459.5" y="661" width="18" height="7" fill="#7a7a7a"/>
 <path d="M461 663 Q461 653.5 468.5 653.5 Q476 653.5 476 663Z" fill="#c0c0c0"/>
 <circle cx="466" cy="659" r="1.6" fill="#232323"/><circle cx="471" cy="659" r="1.6" fill="#232323"/>
 <rect x="467.3" y="662" width="2.4" height="6" fill="#c0c0c0"/>
 <rect x="488.5" y="657" width="11" height="11" fill="#9c9c9c" stroke="#232323" stroke-width="0.8"/><rect x="493" y="653" width="12" height="13" fill="#c4c4c4" stroke="#232323" stroke-width="0.8"/><rect x="497" y="659" width="4" height="1.2" fill="#555"/>
 <g fill="none" stroke="#bcbcbc" stroke-width="1.3"><circle cx="521.5" cy="665" r="4.6"/><circle cx="524" cy="662.5" r="4.6"/><circle cx="526.5" cy="660" r="4.6"/><circle cx="529" cy="657.5" r="4.6" fill="#8a8a8a"/></g>
 <rect x="554" y="654" width="17" height="15" fill="none" stroke="#c8c8c8" stroke-width="1.6"/>
 <path d="M556 657 Q560 657 562 662 Q564.5 667 569 667" fill="none" stroke="#c8c8c8" stroke-width="1.3"/>
 <path d="M557 652.5 L557 655 M561 652.5 L561 655 M565 652.5 L565 655 M569 652.5 L569 655" stroke="#c8c8c8" stroke-width="1"/>
</svg>
<!-- column headers -->
<div class="a" style="left:0;top:682px;width:588px;height:19px;background:#292929"></div>
<div class="a" style="left:8px;top:685px;width:1px;height:14px;background:#353535"></div>
<div class="a" style="left:42px;top:685px;width:1px;height:14px;background:#353535"></div>
<div class="a" style="left:78px;top:685px;width:1px;height:14px;background:#353535"></div>
<div class="a" style="left:187px;top:685px;width:1px;height:14px;background:#353535"></div>
<div class="a" style="left:366px;top:685px;width:1px;height:14px;background:#353535"></div>
<div class="a" style="left:570px;top:685px;width:1px;height:14px;background:#353535"></div>
<svg width="20" height="20" style="left:20px;top:683px"><path d="M2 5 L2 2 L8 1.5 L15.5 9 L10 14.5 L2.5 7 Z" fill="#bcbcbc"/><circle cx="5" cy="4.5" r="1.3" fill="#292929"/></svg>
<style>.hd{position:absolute;line-height:14px;font-size:10.2px;color:#7c7c7c;white-space:nowrap;margin-top:1px}</style>
<div class="hd" style="left:48px;top:686px">#</div>
<div class="hd" style="left:84px;top:686px">Layer Name</div>
<div class="hd" style="left:192px;top:686px">Mode</div>
<div class="hd" style="left:275px;top:686px">T</div>
<div class="hd" style="left:294px;top:686px">TrkMat</div>
<div class="hd" style="left:373px;top:686px">Parent &amp; Link</div>
<!-- rows -->
<div class="a" style="left:0;top:702px;width:588px;height:18px;background:#3a3a3a"></div>
<div class="a" style="left:0;top:720.5px;width:588px;height:18px;background:#272727"></div>
<div class="a" style="left:0;top:739px;width:588px;height:18px;background:#262626"></div>
<div class="a" style="left:0;top:757.5px;width:588px;height:18px;background:#262626"></div>
<div class="a" style="left:0;top:776px;width:588px;height:18px;background:#262626"></div>
<div class="a" style="left:588px;top:682px;width:2px;height:194px;background:#1c1c1c"></div>
<style>.rn{position:absolute;line-height:14px;font-size:12px;color:#8c8c8c;white-space:nowrap}
.nm{position:absolute;line-height:14px;font-size:11.7px;font-weight:bold;color:#989898;white-space:nowrap}
.md{position:absolute;height:15px;background:#151515}
.mdt{position:absolute;line-height:14px;font-size:12px;color:#d0d0d0;white-space:nowrap}
.ch2{position:absolute;width:5px;height:5px;border-right:1.4px solid #c8c8c8;border-bottom:1.4px solid #c8c8c8;transform:rotate(45deg)}
.rc{position:absolute;width:4.5px;height:4.5px;border-right:1.3px solid #9a9a9a;border-top:1.3px solid #9a9a9a;transform:rotate(45deg)}</style>
<div class="rc" style="left:12px;top:709.0px"></div>
<div class="a" style="left:26px;top:705.0px;width:13px;height:13px;background:#a89a7e"></div>
<div class="rn" style="left:49px;top:704.5px;font-weight:bold">1</div>
<div class="a" style="left:98px;top:702.5px;width:88px;height:17px;background:#8e8e8e"></div>
<div class="nm" style="left:101px;top:704.5px;color:#1e1e1e">7</div>
<div class="md" style="left:190px;top:704.0px;width:76px"></div>
<div class="mdt" style="left:197px;top:704.5px">Normal</div>
<div class="ch2" style="left:254px;top:707.0px"></div>
<div class="a" style="left:272px;top:705.0px;width:13px;height:13px;background:#333"></div>
<div class="a" style="left:286px;top:702.5px;width:80px;height:17px;background:#3e3e3e"></div>
<div class="md" style="left:393px;top:704.0px;width:173px"></div>
<div class="mdt" style="left:399px;top:704.5px">None</div>
<div class="ch2" style="left:554px;top:707.0px"></div>
<div class="rc" style="left:12px;top:727.5px"></div>
<div class="a" style="left:26px;top:723.5px;width:13px;height:13px;background:#3b9f3b"></div>
<div class="rn" style="left:49px;top:723px;font-weight:bold">2</div>
<div class="nm" style="left:101px;top:723px">Smoothie</div>
<div class="md" style="left:190px;top:722.5px;width:76px"></div>
<div class="mdt" style="left:197px;top:723px">Normal</div>
<div class="ch2" style="left:254px;top:725.5px"></div>
<div class="a" style="left:272px;top:723.5px;width:13px;height:13px;background:#222"></div>
<div class="md" style="left:292px;top:722.5px;width:69px"></div>
<div class="mdt" style="left:298px;top:723px">None</div>
<div class="ch2" style="left:350px;top:725.5px"></div>
<div class="md" style="left:393px;top:722.5px;width:173px"></div>
<div class="mdt" style="left:399px;top:723px">3. 8</div>
<div class="ch2" style="left:554px;top:725.5px"></div>
<div class="rc" style="left:12px;top:746.0px"></div>
<div class="a" style="left:26px;top:742.0px;width:13px;height:13px;background:#3b9f3b"></div>
<div class="rn" style="left:49px;top:741.5px;font-weight:bold">3</div>
<div class="nm" style="left:101px;top:741.5px">8</div>
<div class="md" style="left:190px;top:741.0px;width:76px"></div>
<div class="mdt" style="left:197px;top:741.5px">Normal</div>
<div class="ch2" style="left:254px;top:744.0px"></div>
<div class="a" style="left:272px;top:742.0px;width:13px;height:13px;background:#222"></div>
<div class="md" style="left:292px;top:741.0px;width:69px"></div>
<div class="mdt" style="left:298px;top:741.5px">None</div>
<div class="ch2" style="left:350px;top:744.0px"></div>
<div class="md" style="left:393px;top:741.0px;width:173px"></div>
<div class="mdt" style="left:399px;top:741.5px">None</div>
<div class="ch2" style="left:554px;top:744.0px"></div>
<div class="rc" style="left:12px;top:764.5px"></div>
<div class="a" style="left:26px;top:760.5px;width:13px;height:13px;background:#a89a7e"></div>
<div class="rn" style="left:49px;top:760px;font-weight:bold">4</div>
<div class="nm" style="left:101px;top:760px">9</div>
<div class="md" style="left:190px;top:759.5px;width:76px"></div>
<div class="mdt" style="left:197px;top:760px">Normal</div>
<div class="ch2" style="left:254px;top:762.5px"></div>
<div class="a" style="left:272px;top:760.5px;width:13px;height:13px;background:#222"></div>
<div class="md" style="left:292px;top:759.5px;width:69px"></div>
<div class="mdt" style="left:298px;top:760px">None</div>
<div class="ch2" style="left:350px;top:762.5px"></div>
<div class="md" style="left:393px;top:759.5px;width:173px"></div>
<div class="mdt" style="left:399px;top:760px">None</div>
<div class="ch2" style="left:554px;top:762.5px"></div>
<div class="rc" style="left:12px;top:783.0px"></div>
<div class="a" style="left:26px;top:779.0px;width:13px;height:13px;background:#5b8ed6"></div>
<div class="rn" style="left:49px;top:778.5px;font-weight:bold">5</div>
<div class="nm" style="left:101px;top:778.5px">Background</div>
<div class="md" style="left:190px;top:778.0px;width:76px"></div>
<div class="mdt" style="left:197px;top:778.5px">Normal</div>
<div class="ch2" style="left:254px;top:781.0px"></div>
<div class="a" style="left:272px;top:779.0px;width:13px;height:13px;background:#222"></div>
<div class="md" style="left:292px;top:778.0px;width:69px"></div>
<div class="mdt" style="left:298px;top:778.5px">None</div>
<div class="ch2" style="left:350px;top:781.0px"></div>
<div class="md" style="left:393px;top:778.0px;width:173px"></div>
<div class="mdt" style="left:399px;top:778.5px">None</div>
<div class="ch2" style="left:554px;top:781.0px"></div>
<svg width="1450" height="876" style="left:0;top:0">
 <g>
  <rect x="80" y="704.5" width="17" height="14" fill="#c8c8c8"/><rect x="82.5" y="707" width="12" height="9" fill="#8a8a8a"/>
  <circle cx="86" cy="710" r="2.2" fill="#4a7ac8"/><circle cx="90.5" cy="712" r="2.5" fill="#d0603a"/><rect x="84" y="712" width="4" height="3" fill="#3a9a4a"/>
  <rect x="80" y="760" width="17" height="14" fill="#c8c8c8"/><rect x="82.5" y="762.5" width="12" height="9" fill="#8a8a8a"/>
  <circle cx="86" cy="765.5" r="2.2" fill="#4a7ac8"/><circle cx="90.5" cy="767.5" r="2.5" fill="#d0603a"/><rect x="84" y="767.5" width="4" height="3" fill="#3a9a4a"/>
 </g>
 <text x="82" y="735" font-family="Liberation Serif" font-size="15" font-weight="bold" fill="#bdbdbd">T</text>
 <path d="M87.5 741.5 L89.3 746.3 L94.5 746.5 L90.4 749.6 L91.9 754.5 L87.5 751.6 L83.1 754.5 L84.6 749.6 L80.5 746.5 L85.7 746.3Z" fill="#bdbdbd"/>
 <path d="M87.5 778.5 L89.3 783.3 L94.5 783.5 L90.4 786.6 L91.9 791.5 L87.5 788.6 L83.1 791.5 L84.6 786.6 L80.5 783.5 L85.7 783.3Z" fill="#bdbdbd"/>
 <path d="M379.20 710.62 L379.19 710.46 L379.14 710.31 L379.06 710.15 L378.95 710.01 L378.81 709.88 L378.63 709.77 L378.43 709.69 L378.20 709.65 L377.96 709.65 L377.72 709.69 L377.47 709.78 L377.23 709.91 L377.01 710.09 L376.82 710.31 L376.66 710.58 L376.54 710.87 L376.48 711.19 L376.46 711.53 L376.51 711.88 L376.62 712.23 L376.78 712.57 L377.01 712.88 L377.30 713.15 L377.63 713.39 L378.01 713.57 L378.43 713.68 L378.87 713.73 L379.32 713.71 L379.78 713.60 L380.22 713.43 L380.64 713.17 L381.02 712.84 L381.35 712.45 L381.61 711.99 L381.80 711.49 L381.91 710.96 L381.93 710.40 L381.86 709.83 L381.69 709.27 L381.43 708.74 L381.08 708.25 L380.64 707.81 L380.14 707.44 L379.56 707.15 L378.94 706.96 L378.28 706.87 L377.61 706.89 L376.93 707.02 L376.28 707.26 L375.66 707.61 L375.10 708.06 L374.61 708.60 L374.21 709.23 L373.91 709.92 L373.72 710.67 L373.66 711.44 L373.72 712.23 L373.92 713.01 L374.24 713.76 L374.68 714.46 L375.24 715.08 L375.90 715.61 L376.65 716.04 L377.47 716.34 L378.33 716.51 L379.23 716.54 L380.13 716.42 L381.01 716.15 L381.84 715.74 L382.61 715.20 L383.29 714.53 L383.86 713.75 L384.30 712.88 L384.59 711.93 L384.74 710.94 L384.72 709.93 L384.54 708.92 L384.19 707.95 L383.68 707.03 L383.03 706.20" fill="none" stroke="#a8a8a8" stroke-width="1.3"/>
<path d="M379.20 729.12 L379.19 728.96 L379.14 728.81 L379.06 728.65 L378.95 728.51 L378.81 728.38 L378.63 728.27 L378.43 728.19 L378.20 728.15 L377.96 728.15 L377.72 728.19 L377.47 728.28 L377.23 728.41 L377.01 728.59 L376.82 728.81 L376.66 729.08 L376.54 729.37 L376.48 729.69 L376.46 730.03 L376.51 730.38 L376.62 730.73 L376.78 731.07 L377.01 731.38 L377.30 731.65 L377.63 731.89 L378.01 732.07 L378.43 732.18 L378.87 732.23 L379.32 732.21 L379.78 732.10 L380.22 731.93 L380.64 731.67 L381.02 731.34 L381.35 730.95 L381.61 730.49 L381.80 729.99 L381.91 729.46 L381.93 728.90 L381.86 728.33 L381.69 727.77 L381.43 727.24 L381.08 726.75 L380.64 726.31 L380.14 725.94 L379.56 725.65 L378.94 725.46 L378.28 725.37 L377.61 725.39 L376.93 725.52 L376.28 725.76 L375.66 726.11 L375.10 726.56 L374.61 727.10 L374.21 727.73 L373.91 728.42 L373.72 729.17 L373.66 729.94 L373.72 730.73 L373.92 731.51 L374.24 732.26 L374.68 732.96 L375.24 733.58 L375.90 734.11 L376.65 734.54 L377.47 734.84 L378.33 735.01 L379.23 735.04 L380.13 734.92 L381.01 734.65 L381.84 734.24 L382.61 733.70 L383.29 733.03 L383.86 732.25 L384.30 731.38 L384.59 730.43 L384.74 729.44 L384.72 728.43 L384.54 727.42 L384.19 726.45 L383.68 725.53 L383.03 724.70" fill="none" stroke="#a8a8a8" stroke-width="1.3"/>
<path d="M379.20 747.62 L379.19 747.46 L379.14 747.31 L379.06 747.15 L378.95 747.01 L378.81 746.88 L378.63 746.77 L378.43 746.69 L378.20 746.65 L377.96 746.65 L377.72 746.69 L377.47 746.78 L377.23 746.91 L377.01 747.09 L376.82 747.31 L376.66 747.58 L376.54 747.87 L376.48 748.19 L376.46 748.53 L376.51 748.88 L376.62 749.23 L376.78 749.57 L377.01 749.88 L377.30 750.15 L377.63 750.39 L378.01 750.57 L378.43 750.68 L378.87 750.73 L379.32 750.71 L379.78 750.60 L380.22 750.43 L380.64 750.17 L381.02 749.84 L381.35 749.45 L381.61 748.99 L381.80 748.49 L381.91 747.96 L381.93 747.40 L381.86 746.83 L381.69 746.27 L381.43 745.74 L381.08 745.25 L380.64 744.81 L380.14 744.44 L379.56 744.15 L378.94 743.96 L378.28 743.87 L377.61 743.89 L376.93 744.02 L376.28 744.26 L375.66 744.61 L375.10 745.06 L374.61 745.60 L374.21 746.23 L373.91 746.92 L373.72 747.67 L373.66 748.44 L373.72 749.23 L373.92 750.01 L374.24 750.76 L374.68 751.46 L375.24 752.08 L375.90 752.61 L376.65 753.04 L377.47 753.34 L378.33 753.51 L379.23 753.54 L380.13 753.42 L381.01 753.15 L381.84 752.74 L382.61 752.20 L383.29 751.53 L383.86 750.75 L384.30 749.88 L384.59 748.93 L384.74 747.94 L384.72 746.93 L384.54 745.92 L384.19 744.95 L383.68 744.03 L383.03 743.20" fill="none" stroke="#a8a8a8" stroke-width="1.3"/>
<path d="M379.20 766.12 L379.19 765.96 L379.14 765.81 L379.06 765.65 L378.95 765.51 L378.81 765.38 L378.63 765.27 L378.43 765.19 L378.20 765.15 L377.96 765.15 L377.72 765.19 L377.47 765.28 L377.23 765.41 L377.01 765.59 L376.82 765.81 L376.66 766.08 L376.54 766.37 L376.48 766.69 L376.46 767.03 L376.51 767.38 L376.62 767.73 L376.78 768.07 L377.01 768.38 L377.30 768.65 L377.63 768.89 L378.01 769.07 L378.43 769.18 L378.87 769.23 L379.32 769.21 L379.78 769.10 L380.22 768.93 L380.64 768.67 L381.02 768.34 L381.35 767.95 L381.61 767.49 L381.80 766.99 L381.91 766.46 L381.93 765.90 L381.86 765.33 L381.69 764.77 L381.43 764.24 L381.08 763.75 L380.64 763.31 L380.14 762.94 L379.56 762.65 L378.94 762.46 L378.28 762.37 L377.61 762.39 L376.93 762.52 L376.28 762.76 L375.66 763.11 L375.10 763.56 L374.61 764.10 L374.21 764.73 L373.91 765.42 L373.72 766.17 L373.66 766.94 L373.72 767.73 L373.92 768.51 L374.24 769.26 L374.68 769.96 L375.24 770.58 L375.90 771.11 L376.65 771.54 L377.47 771.84 L378.33 772.01 L379.23 772.04 L380.13 771.92 L381.01 771.65 L381.84 771.24 L382.61 770.70 L383.29 770.03 L383.86 769.25 L384.30 768.38 L384.59 767.43 L384.74 766.44 L384.72 765.43 L384.54 764.42 L384.19 763.45 L383.68 762.53 L383.03 761.70" fill="none" stroke="#a8a8a8" stroke-width="1.3"/>
<path d="M379.20 784.62 L379.19 784.46 L379.14 784.31 L379.06 784.15 L378.95 784.01 L378.81 783.88 L378.63 783.77 L378.43 783.69 L378.20 783.65 L377.96 783.65 L377.72 783.69 L377.47 783.78 L377.23 783.91 L377.01 784.09 L376.82 784.31 L376.66 784.58 L376.54 784.87 L376.48 785.19 L376.46 785.53 L376.51 785.88 L376.62 786.23 L376.78 786.57 L377.01 786.88 L377.30 787.15 L377.63 787.39 L378.01 787.57 L378.43 787.68 L378.87 787.73 L379.32 787.71 L379.78 787.60 L380.22 787.43 L380.64 787.17 L381.02 786.84 L381.35 786.45 L381.61 785.99 L381.80 785.49 L381.91 784.96 L381.93 784.40 L381.86 783.83 L381.69 783.27 L381.43 782.74 L381.08 782.25 L380.64 781.81 L380.14 781.44 L379.56 781.15 L378.94 780.96 L378.28 780.87 L377.61 780.89 L376.93 781.02 L376.28 781.26 L375.66 781.61 L375.10 782.06 L374.61 782.60 L374.21 783.23 L373.91 783.92 L373.72 784.67 L373.66 785.44 L373.72 786.23 L373.92 787.01 L374.24 787.76 L374.68 788.46 L375.24 789.08 L375.90 789.61 L376.65 790.04 L377.47 790.34 L378.33 790.51 L379.23 790.54 L380.13 790.42 L381.01 790.15 L381.84 789.74 L382.61 789.20 L383.29 788.53 L383.86 787.75 L384.30 786.88 L384.59 785.93 L384.74 784.94 L384.72 783.93 L384.54 782.92 L384.19 781.95 L383.68 781.03 L383.03 780.20" fill="none" stroke="#a8a8a8" stroke-width="1.3"/>

</svg>


<div class="a" style="left:590px;top:659px;width:659px;height:21px;background:#1e1e1e"></div>
<div class="a" style="left:593px;top:649px;width:655px;height:9px;background:#636363;border-radius:5px"></div>
<div class="a" style="left:589px;top:648.5px;width:9px;height:10px;background:#5b8ed6;border-radius:5px 0 0 5px"></div>
<div class="a" style="left:1240px;top:648.5px;width:9px;height:10px;background:#5b8ed6;border-radius:0 5px 5px 0"></div>
<style>.rl{position:absolute;line-height:12px;font-size:11px;color:#a8a8a8;white-space:nowrap;margin-top:0.5px}</style>
<div class="a" style="left:589px;top:659px;width:40px;height:20px;overflow:hidden"><div class="rl" style="left:-8px;top:2px">00:00s</div></div>
<div class="rl" style="left:742px;top:661px">00:15s</div>
<div class="rl" style="left:903px;top:661px">00:30s</div>
<div class="rl" style="left:1064px;top:661px">00:45s</div>
<div class="a" style="left:1180px;top:659px;width:0;height:0;overflow:hidden"></div>
<div class="rl" style="left:1225px;top:661px;width:24px;overflow:hidden">01:00s</div>
<div class="a" style="left:758px;top:675px;width:1px;height:4px;background:#a0a0a0"></div>
<div class="a" style="left:919px;top:675px;width:1px;height:4px;background:#a0a0a0"></div>
<div class="a" style="left:1080px;top:675px;width:1px;height:4px;background:#a0a0a0"></div>
<div class="a" style="left:1241px;top:670px;width:1px;height:10px;background:#a0a0a0"></div>
<div class="a" style="left:590px;top:680px;width:651px;height:18px;background:#5e5e5e"></div>
<div class="a" style="left:589px;top:680.5px;width:9px;height:17px;background:#5b8ed6;border-radius:5px 0 0 5px"></div>
<div class="a" style="left:1241px;top:680.5px;width:7px;height:17px;background:#5b8ed6;border-radius:0 5px 5px 0"></div>
<div class="a" style="left:597px;top:698px;width:644px;height:4px;background:#3fa93a"></div>
<div class="a" style="left:588px;top:702px;width:9px;height:92px;background:#242424"></div>
<div class="a" style="left:588px;top:702px;width:9px;height:18px;background:#383838"></div>
<div class="a" style="left:597px;top:702.5px;width:644px;height:17px;background:#8e826f"></div>
<div class="a" style="left:597px;top:720.5px;width:644px;height:17.5px;background:#45613f"></div>
<div class="a" style="left:597px;top:738.5px;width:644px;height:17.5px;background:#45613f"></div>
<div class="a" style="left:597px;top:757px;width:644px;height:17.5px;background:#6c6252"></div>
<div class="a" style="left:597px;top:776px;width:644px;height:18px;background:#444c7a"></div>
<div class="a" style="left:1241px;top:702px;width:8px;height:174px;background:#2a2a2a"></div>
<div class="a" style="left:1249px;top:794px;width:18px;height:82px;background:#262626"></div>
<div class="a" style="left:597px;top:794px;width:644px;height:82px;background:#262626"></div>
<div class="a" style="left:0px;top:794px;width:588px;height:82px;background:#1e1e1e"></div>
<div class="a" style="left:590px;top:794px;width:7px;height:82px;background:#1c1c1c"></div>
<svg width="1450" height="876" style="left:0;top:0">
 <path d="M590 664 L604 664 L604 672 L597 678.5 L590 672Z" fill="#5b8ed6"/>
 <rect x="596.5" y="664" width="2" height="212" fill="#4c7cca"/>
 <path d="M1252.5 683 L1266 683 L1266 693 L1259.25 698 L1252.5 693Z" fill="#cfcfcf"/>
 <path d="M1249.5 712 L1255 706.5 L1266 706.5 L1266 717.5 L1255 717.5Z" fill="none" stroke="#cfcfcf" stroke-width="1.6"/>
 <rect x="1257" y="709" width="8" height="6" fill="#cfcfcf"/>
 <circle cx="1254.5" cy="716" r="3" fill="#232323" stroke="#cfcfcf" stroke-width="1.4"/>
 <path d="M634.5 718.5 L634.5 734 L638 730.5 L640.5 736.5 L642.5 735.5 L640 729.8 L645 729.8Z" fill="#111" stroke="#eee" stroke-width="1.1"/>
 <path d="M598 703 L603 703 L598 708Z M1241 703 L1236 703 L1241 708Z M598 757.5 L602 757.5 L598 761.5Z M1241 757.5 L1237 757.5 L1241 761.5Z" fill="#1f1f1f"/>
</svg>

<!-- PARAGRAPH -->
<div class="a" style="left:1268px;top:607px;width:182px;height:6px;background:#181818"></div>
<div class="p" style="left:1272px;top:613px;width:178px;height:263px"></div>
<div class="t" style="left:1286px;top:620.5px;font-size:12px;color:#d4d4d4;-webkit-text-stroke:0.25px #d4d4d4">Paragraph</div>
<div class="hb" style="left:1350px;top:624px"></div>
<div class="t" style="left:1383px;top:620px;font-size:12.5px;color:#9a9a9a">Align</div>
<div class="a" style="left:1284px;top:638px;width:76px;height:2.5px;background:#c8c8c8"></div>
<div class="a" style="left:1281px;top:649px;width:21px;height:21px;background:#141414"></div>
<div class="a" style="left:1276px;top:677px;width:174px;height:1px;background:#2b2b2b"></div>
<svg width="1450" height="876" style="left:0;top:0">
 <g stroke-width="1.6">
  <path d="M1283.5 652 L1295 652 M1283.5 655.5 L1300 655.5 M1283.5 659 L1296 659 M1283.5 662.5 L1300 662.5 M1283.5 666 L1294 666" stroke="#5b86d6"/>
  <path d="M1312 652 L1325 652 M1309.5 655.5 L1327 655.5 M1312 659 L1325 659 M1309.5 662.5 L1327 662.5 M1312 666 L1325 666" stroke="#b8b8b8"/>
  <path d="M1339 652 L1353.5 652 M1336.5 655.5 L1353.5 655.5 M1339 659 L1353.5 659 M1336.5 662.5 L1353.5 662.5 M1339 666 L1353.5 666" stroke="#b8b8b8"/>
  <path d="M1370 652 L1386 652 M1370 655.5 L1386 655.5 M1370 659 L1386 659 M1370 662.5 L1386 662.5 M1370 666 L1381 666" stroke="#b8b8b8"/>
  <path d="M1397 652 L1413 652 M1397 655.5 L1413 655.5 M1397 659 L1413 659 M1397 662.5 L1413 662.5 M1400 666 L1410 666" stroke="#b8b8b8"/>
  <path d="M1424.5 652 L1440.5 652 M1424.5 655.5 L1440.5 655.5 M1424.5 659 L1440.5 659 M1424.5 662.5 L1440.5 662.5 M1429.5 666 L1440.5 666" stroke="#b8b8b8"/>
 </g>
 <g stroke="#b8b8b8" stroke-width="1.3" fill="none">
  <path d="M1287.5 681 L1287.5 697.5 M1289.5 682.5 L1296 682.5 M1289.5 686 L1297 686 M1289.5 689.5 L1296 689.5 M1289.5 693 L1297 693 M1289.5 696.5 L1296 696.5 M1280 689 L1286 689"/>
  <path d="M1289.5 701 L1289.5 718 M1280 702.5 L1287 702.5 M1280 706 L1287 706 M1280 709.5 L1287 709.5 M1280 713 L1287 713 M1280 716.5 L1287 716.5 M1291 710 L1297 710"/>
  <rect x="1365" y="683.5" width="9.5" height="4.5"/><path d="M1365 692 L1374.5 692 M1365 695.5 L1374.5 695.5 M1365 699 L1374.5 699 M1357.5 686 L1364 686"/>
  <rect x="1365" y="713.5" width="9.5" height="4.5"/><path d="M1365 703 L1374.5 703 M1365 706.5 L1374.5 706.5 M1365 710 L1374.5 710 M1357.5 716 L1364 716"/>
  <path d="M1435.5 681.5 L1446 681.5 M1435 685 L1447 685 M1435 688.5 L1447 688.5 M1435 692 L1447 692 M1435 695.5 L1447 695.5 M1429 680 L1434 680"/>
 </g>
 <g fill="#b8b8b8"><path d="M1286.5 689 L1283 686 L1283 692Z M1290.5 710 L1294 707 L1294 713Z M1364.5 686 L1361.5 683.5 L1361.5 688.5Z M1364.5 716 L1361.5 713.5 L1361.5 718.5Z M1435 680 L1432 677.5 L1432 682.5Z"/></g>
</svg>
<div class="cv" style="left:1303px;top:682px"><span class="bl">0</span> px</div>
<div class="cv" style="left:1303px;top:701px"><span class="bl">0</span> px</div>
<div class="cv" style="left:1382px;top:682px"><span class="bl">0</span> px</div>
<div class="cv" style="left:1382px;top:701px"><span class="bl">0</span> px</div>
<div class="a" style="left:1429px;top:703px;width:21px;height:22px;background:#141414"></div>
<svg width="22" height="22" style="left:1430px;top:703px"><path d="M2 6 L7 10.5 L2 15Z" fill="#5b86d6"/><path d="M13 4 L20 4 L20 18 L18.5 18 L18.5 5.5 L16.5 5.5 L16.5 18 L15 18 L15 11 Q9 10.5 9 7.5 Q9 4 13 4Z" fill="#5b86d6"/></svg>

</body></html>
